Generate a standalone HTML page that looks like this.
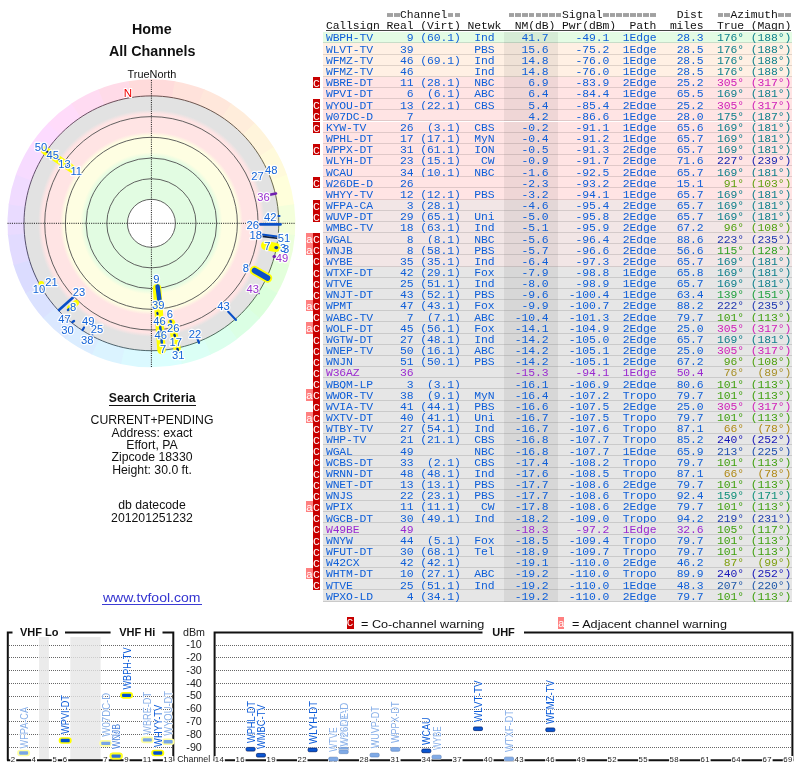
<!DOCTYPE html>
<html><head><meta charset="utf-8"><style>
html,body{margin:0;padding:0;background:#fff;width:800px;height:768px;overflow:hidden;position:relative}
#wrap{position:absolute;left:0;top:0;width:800px;height:768px;will-change:transform}
.m{position:absolute;font-family:"Liberation Mono",monospace;font-size:11.4px;line-height:11.4px;white-space:pre;letter-spacing:-0.096px}
.s{position:absolute;font-family:"Liberation Sans",sans-serif;text-align:center;white-space:pre}
.row{position:absolute;left:323px;width:469px;height:10.163px;border-bottom:1px solid rgba(0,0,0,0.12);box-sizing:content-box}
.nmc{position:absolute;left:504.3px;width:53.7px;height:11.163px;background:rgba(40,40,40,0.075)}
.bc{position:absolute;left:313px;width:7px;height:11.163px;background:#c80000;color:#fff;font-family:"Liberation Mono",monospace;font-size:11.5px;line-height:13.76px;text-align:center}
.abs{position:absolute}
.eq{position:absolute;width:5.7px;height:4px;background:linear-gradient(#a8a8a8 0,#a0a0a0 40%,#b4b4b4 50%,#a0a0a0 60%,#a8a8a8 100%)}
.pl{font-family:"Liberation Sans",sans-serif;font-size:11.2px;text-anchor:middle}
.plh{font-family:"Liberation Sans",sans-serif;font-size:11.2px;text-anchor:middle;fill:#fff;stroke:#fff;stroke-width:2.4px;stroke-linejoin:round;opacity:0.9}
.gd{stroke:#666;stroke-width:1;stroke-dasharray:1 1}
.fr{fill:none;stroke:#111;stroke-width:2}
.tl{font-family:"Liberation Sans",sans-serif;font-weight:bold;font-size:11px;fill:#111}
.ax{font-family:"Liberation Sans",sans-serif;font-size:10.7px;fill:#222}
.ch{font-family:"Liberation Sans",sans-serif;font-size:8.9px;fill:#222}
.cl{font-family:"Liberation Sans",sans-serif;font-size:7.8px;fill:#222;letter-spacing:0.5px}
.vl{font-family:"Liberation Sans",sans-serif;font-size:10.2px;paint-order:stroke;stroke:#fff;stroke-width:1.6px;stroke-linejoin:round}
.ba{position:absolute;left:306px;width:7px;height:11.163px;background:#ff8080;color:#fff;font-family:"Liberation Mono",monospace;font-size:11.5px;line-height:13.76px;text-align:center}
</style></head><body><div id="wrap">
<svg class="abs" style="left:0;top:0" width="300" height="372" viewBox="0 0 300 372"><defs><radialGradient id="rg" gradientUnits="userSpaceOnUse" cx="151.4" cy="223.3" r="127.4"><stop offset="0.0000" stop-color="#e2fce2"/><stop offset="0.5181" stop-color="#e2fce2"/><stop offset="0.5573" stop-color="#fefee2"/><stop offset="0.6860" stop-color="#fefee2"/><stop offset="0.7174" stop-color="#ffe4e4"/><stop offset="0.8587" stop-color="#ffe4e4"/><stop offset="0.8901" stop-color="#e2e2e2"/><stop offset="1.0000" stop-color="#e2e2e2"/></radialGradient></defs><path d="M128.13 81.19 A144.0 144.0 0 0 1 175.41 81.32 L172.65 97.68 A127.4 127.4 0 0 0 130.81 97.57 Z" fill="#ffdbdb"/><path d="M174.67 81.19 A144.0 144.0 0 0 1 204.85 89.59 L198.69 105.00 A127.4 127.4 0 0 0 171.99 97.57 Z" fill="#ffe2db"/><path d="M204.15 89.31 A144.0 144.0 0 0 1 231.88 103.89 L222.60 117.66 A127.4 127.4 0 0 0 198.07 104.76 Z" fill="#ffe7db"/><path d="M231.26 103.47 A144.0 144.0 0 0 1 255.28 123.58 L243.31 135.07 A127.4 127.4 0 0 0 222.05 117.28 Z" fill="#ffeddb"/><path d="M254.76 123.03 A144.0 144.0 0 0 1 274.00 147.76 L259.86 156.47 A127.4 127.4 0 0 0 242.84 134.59 Z" fill="#fff4db"/><path d="M273.60 147.12 A144.0 144.0 0 0 1 287.18 175.35 L271.53 180.88 A127.4 127.4 0 0 0 259.51 155.90 Z" fill="#fffadb"/><path d="M286.93 174.64 A144.0 144.0 0 0 1 294.25 205.10 L277.78 207.20 A127.4 127.4 0 0 0 271.31 180.25 Z" fill="#ffffdb"/><path d="M294.15 204.35 A144.0 144.0 0 0 1 294.87 235.68 L278.33 234.25 A127.4 127.4 0 0 0 277.69 206.54 Z" fill="#f4ffdb"/><path d="M294.93 234.92 A144.0 144.0 0 0 1 289.02 265.69 L273.15 260.80 A127.4 127.4 0 0 0 278.38 233.58 Z" fill="#ecffdb"/><path d="M289.24 264.97 A144.0 144.0 0 0 1 276.97 293.79 L262.49 285.67 A127.4 127.4 0 0 0 273.35 260.17 Z" fill="#e3ffdb"/><path d="M277.33 293.13 A144.0 144.0 0 0 1 259.25 318.72 L246.82 307.72 A127.4 127.4 0 0 0 262.82 285.08 Z" fill="#dbffdc"/><path d="M259.75 318.15 A144.0 144.0 0 0 1 236.67 339.34 L226.84 325.96 A127.4 127.4 0 0 0 247.26 307.22 Z" fill="#dbffe4"/><path d="M237.28 338.89 A144.0 144.0 0 0 1 210.25 354.73 L203.46 339.58 A127.4 127.4 0 0 0 227.38 325.57 Z" fill="#dbffed"/><path d="M210.93 354.42 A144.0 144.0 0 0 1 181.17 364.19 L177.74 347.95 A127.4 127.4 0 0 0 204.07 339.30 Z" fill="#dbfff5"/><path d="M181.90 364.03 A144.0 144.0 0 0 1 150.75 367.30 L150.82 350.70 A127.4 127.4 0 0 0 178.39 347.81 Z" fill="#dbfffe"/><path d="M151.50 367.30 A144.0 144.0 0 0 1 120.36 363.91 L123.93 347.70 A127.4 127.4 0 0 0 151.49 350.70 Z" fill="#dbf9ff"/><path d="M121.09 364.07 A144.0 144.0 0 0 1 91.36 354.19 L98.28 339.10 A127.4 127.4 0 0 0 124.59 347.85 Z" fill="#dbf3ff"/><path d="M92.05 354.50 A144.0 144.0 0 0 1 65.08 338.56 L75.03 325.27 A127.4 127.4 0 0 0 98.89 339.38 Z" fill="#dbedff"/><path d="M65.68 339.01 A144.0 144.0 0 0 1 42.69 317.73 L55.22 306.85 A127.4 127.4 0 0 0 75.57 325.67 Z" fill="#dbe8ff"/><path d="M43.18 318.30 A144.0 144.0 0 0 1 25.20 292.65 L39.75 284.66 A127.4 127.4 0 0 0 55.66 307.35 Z" fill="#dbe2ff"/><path d="M25.56 293.31 A144.0 144.0 0 0 1 13.40 264.44 L29.31 259.70 A127.4 127.4 0 0 0 40.07 285.24 Z" fill="#dbdcff"/><path d="M13.62 265.16 A144.0 144.0 0 0 1 7.83 234.37 L24.38 233.10 A127.4 127.4 0 0 0 29.50 260.34 Z" fill="#e2dbff"/><path d="M7.89 235.12 A144.0 144.0 0 0 1 8.73 203.81 L25.17 206.05 A127.4 127.4 0 0 0 24.43 233.76 Z" fill="#e9dbff"/><path d="M8.63 204.55 A144.0 144.0 0 0 1 16.06 174.12 L31.66 179.79 A127.4 127.4 0 0 0 25.08 206.72 Z" fill="#f0dbff"/><path d="M15.80 174.83 A144.0 144.0 0 0 1 29.49 146.65 L43.55 155.49 A127.4 127.4 0 0 0 31.43 180.42 Z" fill="#f7dbff"/><path d="M29.09 147.29 A144.0 144.0 0 0 1 48.43 122.64 L60.30 134.24 A127.4 127.4 0 0 0 43.19 156.05 Z" fill="#fddbff"/><path d="M47.90 123.18 A144.0 144.0 0 0 1 72.00 103.16 L81.16 117.01 A127.4 127.4 0 0 0 59.83 134.72 Z" fill="#ffdbfa"/><path d="M71.38 103.58 A144.0 144.0 0 0 1 99.16 89.11 L105.18 104.58 A127.4 127.4 0 0 0 80.60 117.38 Z" fill="#ffdbf2"/><path d="M98.46 89.38 A144.0 144.0 0 0 1 128.67 81.10 L131.29 97.50 A127.4 127.4 0 0 0 104.56 104.82 Z" fill="#ffdbe8"/><circle cx="151.4" cy="223.3" r="127.4" fill="url(#rg)"/><circle cx="151.4" cy="223.3" r="24" fill="#fff"/><circle cx="151.4" cy="223.3" r="24.0" fill="none" stroke="#505050" stroke-width="0.9"/><circle cx="151.4" cy="223.3" r="44.6" fill="none" stroke="#505050" stroke-width="0.9"/><circle cx="151.4" cy="223.3" r="65.3" fill="none" stroke="#505050" stroke-width="0.9"/><circle cx="151.4" cy="223.3" r="86.0" fill="none" stroke="#505050" stroke-width="0.9"/><circle cx="151.4" cy="223.3" r="106.7" fill="none" stroke="#505050" stroke-width="0.9"/><path d="M151.40 95.90 A127.4 127.4 0 0 1 162.50 96.38" fill="none" stroke="#5c3e3d" stroke-width="0.9"/><path d="M162.50 96.38 A127.4 127.4 0 0 1 173.52 97.84" fill="none" stroke="#5c403d" stroke-width="0.9"/><path d="M173.52 97.84 A127.4 127.4 0 0 1 184.37 100.24" fill="none" stroke="#5c423d" stroke-width="0.9"/><path d="M184.37 100.24 A127.4 127.4 0 0 1 194.97 103.58" fill="none" stroke="#5c443d" stroke-width="0.9"/><path d="M194.97 103.58 A127.4 127.4 0 0 1 205.24 107.84" fill="none" stroke="#5c463d" stroke-width="0.9"/><path d="M205.24 107.84 A127.4 127.4 0 0 1 215.10 112.97" fill="none" stroke="#5c473d" stroke-width="0.9"/><path d="M215.10 112.97 A127.4 127.4 0 0 1 224.47 118.94" fill="none" stroke="#5c4a3d" stroke-width="0.9"/><path d="M224.47 118.94 A127.4 127.4 0 0 1 233.29 125.71" fill="none" stroke="#5c4c3d" stroke-width="0.9"/><path d="M233.29 125.71 A127.4 127.4 0 0 1 241.49 133.21" fill="none" stroke="#5c4e3d" stroke-width="0.9"/><path d="M241.49 133.21 A127.4 127.4 0 0 1 248.99 141.41" fill="none" stroke="#5c503d" stroke-width="0.9"/><path d="M248.99 141.41 A127.4 127.4 0 0 1 255.76 150.23" fill="none" stroke="#5c523d" stroke-width="0.9"/><path d="M255.76 150.23 A127.4 127.4 0 0 1 261.73 159.60" fill="none" stroke="#5c553d" stroke-width="0.9"/><path d="M261.73 159.60 A127.4 127.4 0 0 1 266.86 169.46" fill="none" stroke="#5c573d" stroke-width="0.9"/><path d="M266.86 169.46 A127.4 127.4 0 0 1 271.12 179.73" fill="none" stroke="#5c583d" stroke-width="0.9"/><path d="M271.12 179.73 A127.4 127.4 0 0 1 274.46 190.33" fill="none" stroke="#5c5a3d" stroke-width="0.9"/><path d="M274.46 190.33 A127.4 127.4 0 0 1 276.86 201.18" fill="none" stroke="#5b5c3d" stroke-width="0.9"/><path d="M276.86 201.18 A127.4 127.4 0 0 1 278.32 212.20" fill="none" stroke="#575c3d" stroke-width="0.9"/><path d="M278.32 212.20 A127.4 127.4 0 0 1 278.80 223.30" fill="none" stroke="#535c3d" stroke-width="0.9"/><path d="M278.80 223.30 A127.4 127.4 0 0 1 278.32 234.40" fill="none" stroke="#505c3d" stroke-width="0.9"/><path d="M278.32 234.40 A127.4 127.4 0 0 1 276.86 245.42" fill="none" stroke="#4d5c3d" stroke-width="0.9"/><path d="M276.86 245.42 A127.4 127.4 0 0 1 274.46 256.27" fill="none" stroke="#4a5c3d" stroke-width="0.9"/><path d="M274.46 256.27 A127.4 127.4 0 0 1 271.12 266.87" fill="none" stroke="#475c3d" stroke-width="0.9"/><path d="M271.12 266.87 A127.4 127.4 0 0 1 266.86 277.14" fill="none" stroke="#445c3d" stroke-width="0.9"/><path d="M266.86 277.14 A127.4 127.4 0 0 1 261.73 287.00" fill="none" stroke="#415c3d" stroke-width="0.9"/><path d="M261.73 287.00 A127.4 127.4 0 0 1 255.76 296.37" fill="none" stroke="#3e5c3d" stroke-width="0.9"/><path d="M255.76 296.37 A127.4 127.4 0 0 1 248.99 305.19" fill="none" stroke="#3d5c3f" stroke-width="0.9"/><path d="M248.99 305.19 A127.4 127.4 0 0 1 241.49 313.39" fill="none" stroke="#3d5c42" stroke-width="0.9"/><path d="M241.49 313.39 A127.4 127.4 0 0 1 233.29 320.89" fill="none" stroke="#3d5c45" stroke-width="0.9"/><path d="M233.29 320.89 A127.4 127.4 0 0 1 224.47 327.66" fill="none" stroke="#3d5c48" stroke-width="0.9"/><path d="M224.47 327.66 A127.4 127.4 0 0 1 215.10 333.63" fill="none" stroke="#3d5c4b" stroke-width="0.9"/><path d="M215.10 333.63 A127.4 127.4 0 0 1 205.24 338.76" fill="none" stroke="#3d5c4e" stroke-width="0.9"/><path d="M205.24 338.76 A127.4 127.4 0 0 1 194.97 343.02" fill="none" stroke="#3d5c51" stroke-width="0.9"/><path d="M194.97 343.02 A127.4 127.4 0 0 1 184.37 346.36" fill="none" stroke="#3d5c54" stroke-width="0.9"/><path d="M184.37 346.36 A127.4 127.4 0 0 1 173.52 348.76" fill="none" stroke="#3d5c57" stroke-width="0.9"/><path d="M173.52 348.76 A127.4 127.4 0 0 1 162.50 350.22" fill="none" stroke="#3d5c5a" stroke-width="0.9"/><path d="M162.50 350.22 A127.4 127.4 0 0 1 151.40 350.70" fill="none" stroke="#3d5a5c" stroke-width="0.9"/><path d="M151.40 350.70 A127.4 127.4 0 0 1 140.30 350.22" fill="none" stroke="#3d585c" stroke-width="0.9"/><path d="M140.30 350.22 A127.4 127.4 0 0 1 129.28 348.76" fill="none" stroke="#3d565c" stroke-width="0.9"/><path d="M129.28 348.76 A127.4 127.4 0 0 1 118.43 346.36" fill="none" stroke="#3d545c" stroke-width="0.9"/><path d="M118.43 346.36 A127.4 127.4 0 0 1 107.83 343.02" fill="none" stroke="#3d525c" stroke-width="0.9"/><path d="M107.83 343.02 A127.4 127.4 0 0 1 97.56 338.76" fill="none" stroke="#3d505c" stroke-width="0.9"/><path d="M97.56 338.76 A127.4 127.4 0 0 1 87.70 333.63" fill="none" stroke="#3d4e5c" stroke-width="0.9"/><path d="M87.70 333.63 A127.4 127.4 0 0 1 78.33 327.66" fill="none" stroke="#3d4c5c" stroke-width="0.9"/><path d="M78.33 327.66 A127.4 127.4 0 0 1 69.51 320.89" fill="none" stroke="#3d4a5c" stroke-width="0.9"/><path d="M69.51 320.89 A127.4 127.4 0 0 1 61.31 313.39" fill="none" stroke="#3d485c" stroke-width="0.9"/><path d="M61.31 313.39 A127.4 127.4 0 0 1 53.81 305.19" fill="none" stroke="#3d465c" stroke-width="0.9"/><path d="M53.81 305.19 A127.4 127.4 0 0 1 47.04 296.37" fill="none" stroke="#3d445c" stroke-width="0.9"/><path d="M47.04 296.37 A127.4 127.4 0 0 1 41.07 287.00" fill="none" stroke="#3d425c" stroke-width="0.9"/><path d="M41.07 287.00 A127.4 127.4 0 0 1 35.94 277.14" fill="none" stroke="#3d405c" stroke-width="0.9"/><path d="M35.94 277.14 A127.4 127.4 0 0 1 31.68 266.87" fill="none" stroke="#3d3d5c" stroke-width="0.9"/><path d="M31.68 266.87 A127.4 127.4 0 0 1 28.34 256.27" fill="none" stroke="#3f3d5c" stroke-width="0.9"/><path d="M28.34 256.27 A127.4 127.4 0 0 1 25.94 245.42" fill="none" stroke="#423d5c" stroke-width="0.9"/><path d="M25.94 245.42 A127.4 127.4 0 0 1 24.48 234.40" fill="none" stroke="#453d5c" stroke-width="0.9"/><path d="M24.48 234.40 A127.4 127.4 0 0 1 24.00 223.30" fill="none" stroke="#473d5c" stroke-width="0.9"/><path d="M24.00 223.30 A127.4 127.4 0 0 1 24.48 212.20" fill="none" stroke="#4a3d5c" stroke-width="0.9"/><path d="M24.48 212.20 A127.4 127.4 0 0 1 25.94 201.18" fill="none" stroke="#4c3d5c" stroke-width="0.9"/><path d="M25.94 201.18 A127.4 127.4 0 0 1 28.34 190.33" fill="none" stroke="#4e3d5c" stroke-width="0.9"/><path d="M28.34 190.33 A127.4 127.4 0 0 1 31.68 179.73" fill="none" stroke="#513d5c" stroke-width="0.9"/><path d="M31.68 179.73 A127.4 127.4 0 0 1 35.94 169.46" fill="none" stroke="#533d5c" stroke-width="0.9"/><path d="M35.94 169.46 A127.4 127.4 0 0 1 41.07 159.60" fill="none" stroke="#563d5c" stroke-width="0.9"/><path d="M41.07 159.60 A127.4 127.4 0 0 1 47.04 150.23" fill="none" stroke="#583d5c" stroke-width="0.9"/><path d="M47.04 150.23 A127.4 127.4 0 0 1 53.81 141.41" fill="none" stroke="#5a3d5c" stroke-width="0.9"/><path d="M53.81 141.41 A127.4 127.4 0 0 1 61.31 133.21" fill="none" stroke="#5c3d5b" stroke-width="0.9"/><path d="M61.31 133.21 A127.4 127.4 0 0 1 69.51 125.71" fill="none" stroke="#5c3d59" stroke-width="0.9"/><path d="M69.51 125.71 A127.4 127.4 0 0 1 78.33 118.94" fill="none" stroke="#5c3d56" stroke-width="0.9"/><path d="M78.33 118.94 A127.4 127.4 0 0 1 87.70 112.97" fill="none" stroke="#5c3d54" stroke-width="0.9"/><path d="M87.70 112.97 A127.4 127.4 0 0 1 97.56 107.84" fill="none" stroke="#5c3d51" stroke-width="0.9"/><path d="M97.56 107.84 A127.4 127.4 0 0 1 107.83 103.58" fill="none" stroke="#5c3d4d" stroke-width="0.9"/><path d="M107.83 103.58 A127.4 127.4 0 0 1 118.43 100.24" fill="none" stroke="#5c3d4a" stroke-width="0.9"/><path d="M118.43 100.24 A127.4 127.4 0 0 1 129.28 97.84" fill="none" stroke="#5c3d46" stroke-width="0.9"/><path d="M129.28 97.84 A127.4 127.4 0 0 1 140.30 96.38" fill="none" stroke="#5c3d43" stroke-width="0.9"/><path d="M140.30 96.38 A127.4 127.4 0 0 1 151.40 95.90" fill="none" stroke="#5c3d3f" stroke-width="0.9"/><line x1="7.5" y1="223.3" x2="295.3" y2="223.3" stroke="#222" stroke-width="1" stroke-dasharray="1.1 1.1"/><line x1="151.4" y1="80" x2="151.4" y2="367" stroke="#222" stroke-width="1" stroke-dasharray="1.1 1.1"/><text x="128" y="96.8" font-family="Liberation Sans" font-size="11.5" fill="#f00000" text-anchor="middle" style="paint-order:stroke" stroke="#fff" stroke-width="2">N</text><line x1="45.0" y1="150.5" x2="71.5" y2="168.5" stroke="#ffff00" stroke-width="8.0" stroke-linecap="round"/><line x1="157.0" y1="288.0" x2="161.5" y2="350.0" stroke="#ffff00" stroke-width="8.5" stroke-linecap="round"/><line x1="171.5" y1="323.0" x2="177.0" y2="348.0" stroke="#ffff00" stroke-width="7.5" stroke-linecap="round"/><line x1="254.5" y1="270.5" x2="267.5" y2="278.0" stroke="#ffff00" stroke-width="9.5" stroke-linecap="round"/><line x1="265.5" y1="245.5" x2="276.0" y2="247.5" stroke="#ffff00" stroke-width="9.0" stroke-linecap="round"/><line x1="41.0" y1="283.5" x2="41.5" y2="283.5" stroke="#ffff00" stroke-width="5.0" stroke-linecap="round"/><line x1="70.0" y1="308.0" x2="76.0" y2="303.0" stroke="#ffff00" stroke-width="6.0" stroke-linecap="round"/><line x1="46.0" y1="151.0" x2="50.0" y2="153.5" stroke="#08246a" stroke-width="2.2" stroke-linecap="round"/><line x1="56.5" y1="158.0" x2="60.0" y2="160.5" stroke="#0a50c8" stroke-width="2.0" stroke-linecap="round"/><line x1="66.0" y1="164.5" x2="69.0" y2="166.0" stroke="#0a50c8" stroke-width="2.0" stroke-linecap="round"/><line x1="157.6" y1="286.5" x2="159.4" y2="300.0" stroke="#0a50c8" stroke-width="4.5" stroke-linecap="round"/><line x1="157.3" y1="313.0" x2="157.6" y2="314.0" stroke="#003090" stroke-width="2.2" stroke-linecap="round"/><line x1="160.2" y1="327.0" x2="160.8" y2="331.5" stroke="#0a50c8" stroke-width="2.5" stroke-linecap="round"/><line x1="161.5" y1="339.0" x2="161.8" y2="343.0" stroke="#0a50c8" stroke-width="2.5" stroke-linecap="round"/><line x1="170.5" y1="321.0" x2="171.0" y2="322.0" stroke="#0a50c8" stroke-width="2.5" stroke-linecap="round"/><line x1="174.5" y1="335.0" x2="174.8" y2="336.0" stroke="#003090" stroke-width="2.5" stroke-linecap="round"/><line x1="177.5" y1="349.0" x2="177.8" y2="350.0" stroke="#003090" stroke-width="2.5" stroke-linecap="round"/><line x1="260.0" y1="224.4" x2="280.5" y2="224.4" stroke="#0a50c8" stroke-width="2.6" stroke-linecap="round"/><line x1="262.0" y1="234.6" x2="277.0" y2="236.4" stroke="#0a50c8" stroke-width="2.0" stroke-linecap="round"/><line x1="262.0" y1="236.4" x2="277.0" y2="238.2" stroke="#102040" stroke-width="1.6" stroke-linecap="round"/><line x1="278.5" y1="216.0" x2="279.5" y2="216.0" stroke="#0a50c8" stroke-width="2.2" stroke-linecap="round"/><line x1="271.0" y1="194.6" x2="276.0" y2="193.6" stroke="#7020b0" stroke-width="2.6" stroke-linecap="round"/><line x1="274.0" y1="256.5" x2="274.6" y2="256.5" stroke="#7020b0" stroke-width="3.0" stroke-linecap="round"/><line x1="258.5" y1="293.0" x2="259.0" y2="293.5" stroke="#7020b0" stroke-width="1.6" stroke-linecap="round"/><line x1="276.0" y1="247.6" x2="276.5" y2="247.6" stroke="#0a3a90" stroke-width="3.4" stroke-linecap="round"/><line x1="254.5" y1="270.5" x2="267.5" y2="278.0" stroke="#0a50c8" stroke-width="5.6" stroke-linecap="round"/><line x1="228.0" y1="311.5" x2="236.0" y2="320.0" stroke="#0a50c8" stroke-width="2.0" stroke-linecap="round"/><line x1="197.6" y1="339.2" x2="199.0" y2="342.8" stroke="#0a50c8" stroke-width="2.2" stroke-linecap="round"/><line x1="59.0" y1="310.0" x2="73.0" y2="297.5" stroke="#0a50c8" stroke-width="2.6" stroke-linecap="round"/><line x1="68.0" y1="310.0" x2="70.0" y2="308.5" stroke="#0a50c8" stroke-width="2.5" stroke-linecap="round"/><line x1="72.5" y1="322.0" x2="74.0" y2="321.0" stroke="#0a50c8" stroke-width="2.4" stroke-linecap="round"/><line x1="82.6" y1="330.0" x2="84.0" y2="327.5" stroke="#0a50c8" stroke-width="2.2" stroke-linecap="round"/><line x1="91.5" y1="335.5" x2="92.5" y2="335.0" stroke="#0a50c8" stroke-width="1.8" stroke-linecap="round"/><line x1="265.0" y1="172.5" x2="265.5" y2="172.0" stroke="#0a50c8" stroke-width="1.5" stroke-linecap="round"/><text x="41.0" y="151.3" class="plh">50</text><text x="52.7" y="158.7" class="plh">45</text><text x="64.5" y="167.5" class="plh">13</text><text x="76.2" y="175.3" class="plh">11</text><text x="257.6" y="179.6" class="plh">27</text><text x="271.3" y="173.6" class="plh">48</text><text x="270.3" y="221.0" class="plh">42</text><text x="252.7" y="228.9" class="plh">26</text><text x="255.7" y="238.6" class="plh">18</text><text x="284.0" y="241.6" class="plh">51</text><text x="267.4" y="250.3" class="plh">7</text><text x="283.0" y="252.3" class="plh">3</text><text x="286.0" y="252.9" class="plh">3</text><text x="245.9" y="271.9" class="plh">8</text><text x="223.5" y="309.9" class="plh">43</text><text x="195.0" y="337.6" class="plh">22</text><text x="156.4" y="282.7" class="plh">9</text><text x="158.3" y="309.1" class="plh">39</text><text x="159.5" y="324.7" class="plh">46</text><text x="160.7" y="338.5" class="plh">46</text><text x="163.2" y="352.9" class="plh">7</text><text x="169.9" y="318.4" class="plh">6</text><text x="173.3" y="331.9" class="plh">26</text><text x="175.7" y="345.9" class="plh">17</text><text x="178.2" y="359.4" class="plh">31</text><text x="39.0" y="292.6" class="plh">10</text><text x="51.4" y="286.4" class="plh">21</text><text x="79.0" y="295.8" class="plh">23</text><text x="73.2" y="311.4" class="plh">8</text><text x="64.5" y="322.5" class="plh">47</text><text x="67.4" y="334.2" class="plh">30</text><text x="88.3" y="325.1" class="plh">49</text><text x="97.0" y="333.3" class="plh">25</text><text x="87.3" y="343.9" class="plh">38</text><text x="263.5" y="200.5" class="plh">36</text><text x="282.0" y="262.1" class="plh">49</text><text x="252.7" y="293.4" class="plh">43</text><text x="41.0" y="151.3" class="pl" fill="#1464d8">50</text><text x="52.7" y="158.7" class="pl" fill="#1464d8">45</text><text x="64.5" y="167.5" class="pl" fill="#1464d8">13</text><text x="76.2" y="175.3" class="pl" fill="#1464d8">11</text><text x="257.6" y="179.6" class="pl" fill="#1464d8">27</text><text x="271.3" y="173.6" class="pl" fill="#1464d8">48</text><text x="270.3" y="221.0" class="pl" fill="#1464d8">42</text><text x="252.7" y="228.9" class="pl" fill="#1464d8">26</text><text x="255.7" y="238.6" class="pl" fill="#1464d8">18</text><text x="284.0" y="241.6" class="pl" fill="#1464d8">51</text><text x="267.4" y="250.3" class="pl" fill="#1464d8">7</text><text x="283.0" y="252.3" class="pl" fill="#1464d8">3</text><text x="286.0" y="252.9" class="pl" fill="#1464d8">3</text><text x="245.9" y="271.9" class="pl" fill="#1464d8">8</text><text x="223.5" y="309.9" class="pl" fill="#1464d8">43</text><text x="195.0" y="337.6" class="pl" fill="#1464d8">22</text><text x="156.4" y="282.7" class="pl" fill="#1464d8">9</text><text x="158.3" y="309.1" class="pl" fill="#1464d8">39</text><text x="159.5" y="324.7" class="pl" fill="#1464d8">46</text><text x="160.7" y="338.5" class="pl" fill="#1464d8">46</text><text x="163.2" y="352.9" class="pl" fill="#1464d8">7</text><text x="169.9" y="318.4" class="pl" fill="#1464d8">6</text><text x="173.3" y="331.9" class="pl" fill="#1464d8">26</text><text x="175.7" y="345.9" class="pl" fill="#1464d8">17</text><text x="178.2" y="359.4" class="pl" fill="#1464d8">31</text><text x="39.0" y="292.6" class="pl" fill="#1464d8">10</text><text x="51.4" y="286.4" class="pl" fill="#1464d8">21</text><text x="79.0" y="295.8" class="pl" fill="#1464d8">23</text><text x="73.2" y="311.4" class="pl" fill="#1464d8">8</text><text x="64.5" y="322.5" class="pl" fill="#1464d8">47</text><text x="67.4" y="334.2" class="pl" fill="#1464d8">30</text><text x="88.3" y="325.1" class="pl" fill="#1464d8">49</text><text x="97.0" y="333.3" class="pl" fill="#1464d8">25</text><text x="87.3" y="343.9" class="pl" fill="#1464d8">38</text><text x="263.5" y="200.5" class="pl" fill="#9a30d0">36</text><text x="282.0" y="262.1" class="pl" fill="#9a30d0">49</text><text x="252.7" y="293.4" class="pl" fill="#9a30d0">43</text></svg>
<div class="s" style="left:-48.10px;top:21.65px;width:400px;font-size:14.3px;line-height:14.3px;color:#111;font-weight:bold;">Home</div><div class="s" style="left:-47.80px;top:44.15px;width:400px;font-size:14.3px;line-height:14.3px;color:#111;font-weight:bold;">All Channels</div><div class="s" style="left:-48.10px;top:68.77px;width:400px;font-size:10.9px;line-height:10.9px;color:#111;">TrueNorth</div><div class="s" style="left:-47.80px;top:391.57px;width:400px;font-size:12.2px;line-height:12.2px;color:#111;font-weight:bold;">Search Criteria</div><div class="abs" style="left:108.5px;top:404.6px;width:87.5px;height:1.4px;background:#111"></div><div class="s" style="left:-48.00px;top:413.73px;width:400px;font-size:12.25px;line-height:12.25px;color:#111;">CURRENT+PENDING</div><div class="s" style="left:-48.00px;top:426.63px;width:400px;font-size:12.25px;line-height:12.25px;color:#111;">Address: exact</div><div class="s" style="left:-48.00px;top:439.03px;width:400px;font-size:12.25px;line-height:12.25px;color:#111;">Effort, PA</div><div class="s" style="left:-48.00px;top:451.43px;width:400px;font-size:12.25px;line-height:12.25px;color:#111;">Zipcode 18330</div><div class="s" style="left:-48.00px;top:464.03px;width:400px;font-size:12.25px;line-height:12.25px;color:#111;">Height: 30.0 ft.</div><div class="s" style="left:-48.00px;top:499.13px;width:400px;font-size:12.25px;line-height:12.25px;color:#111;">db datecode</div><div class="s" style="left:-48.00px;top:512.23px;width:400px;font-size:12.25px;line-height:12.25px;color:#111;">201201251232</div><div class="s" style="left:-48.00px;top:591.53px;width:400px;font-size:12.6px;line-height:12.6px;color:#3434d0;"><span style="display:inline-block;transform:scaleX(1.115);transform-origin:50% 50%;">www.tvfool.com</span></div><div class="abs" style="left:102.2px;top:603.8px;width:99.7px;height:1px;background:#3c3cd4"></div>
<div class="eq" style="left:387.10px;top:13.07px"></div><div class="eq" style="left:393.85px;top:13.07px"></div><div class="m" style="left:400.09px;top:10.47px;color:#111">Channel</div><div class="eq" style="left:447.81px;top:13.07px"></div><div class="eq" style="left:454.55px;top:13.07px"></div><div class="eq" style="left:508.51px;top:13.07px"></div><div class="eq" style="left:515.26px;top:13.07px"></div><div class="eq" style="left:522.00px;top:13.07px"></div><div class="eq" style="left:528.75px;top:13.07px"></div><div class="eq" style="left:535.50px;top:13.07px"></div><div class="eq" style="left:542.24px;top:13.07px"></div><div class="eq" style="left:548.99px;top:13.07px"></div><div class="eq" style="left:555.73px;top:13.07px"></div><div class="m" style="left:561.98px;top:10.47px;color:#111">Signal</div><div class="eq" style="left:602.94px;top:13.07px"></div><div class="eq" style="left:609.69px;top:13.07px"></div><div class="eq" style="left:616.43px;top:13.07px"></div><div class="eq" style="left:623.18px;top:13.07px"></div><div class="eq" style="left:629.92px;top:13.07px"></div><div class="eq" style="left:636.67px;top:13.07px"></div><div class="eq" style="left:643.41px;top:13.07px"></div><div class="eq" style="left:650.16px;top:13.07px"></div><div class="m" style="left:676.64px;top:10.47px;color:#111">Dist</div><div class="eq" style="left:717.61px;top:13.07px"></div><div class="eq" style="left:724.36px;top:13.07px"></div><div class="m" style="left:730.60px;top:10.47px;color:#111">Azimuth</div><div class="eq" style="left:778.32px;top:13.07px"></div><div class="eq" style="left:785.06px;top:13.07px"></div><div class="m" style="left:325.90px;top:21.37px;color:#111">Callsign</div><div class="m" style="left:386.60px;top:21.37px;color:#111">Real</div><div class="m" style="left:420.33px;top:21.37px;color:#111">(Virt)</div><div class="m" style="left:467.54px;top:21.37px;color:#111">Netwk</div><div class="m" style="left:514.76px;top:21.37px;color:#111">NM(dB)</div><div class="m" style="left:561.98px;top:21.37px;color:#111">Pwr(dBm)</div><div class="m" style="left:629.42px;top:21.37px;color:#111">Path</div><div class="m" style="left:669.89px;top:21.37px;color:#111">miles</div><div class="m" style="left:717.11px;top:21.37px;color:#111">True</div><div class="m" style="left:750.84px;top:21.37px;color:#111">(Magn)</div><div style="position:absolute;left:325.5px;top:30px;width:465.5px;height:1px;background:#444"></div><div class="row" style="top:32.200px;background:#e4fce4"></div><div class="nmc" style="top:32.200px"></div><div class="m" style="left:325.90px;top:32.57px;color:#0f5fd8">WBPH-TV</div><div class="m" style="left:406.84px;top:32.57px;color:#0f5fd8">9</div><div class="m" style="left:420.33px;top:32.57px;color:#0f5fd8">(60.1)</div><div class="m" style="left:474.29px;top:32.57px;color:#0f5fd8">Ind</div><div class="m" style="left:521.50px;top:32.57px;color:#0f5fd8">41.7</div><div class="m" style="left:575.46px;top:32.57px;color:#0f5fd8">-49.1</div><div class="m" style="left:622.68px;top:32.57px;color:#0f5fd8">1Edge</div><div class="m" style="left:676.64px;top:32.57px;color:#0f5fd8">28.3</div><div class="m" style="left:717.11px;top:32.57px;color:#10808c">176°</div><div class="m" style="left:750.84px;top:32.57px;color:#10808c">(188°)</div><div class="row" style="top:43.363px;background:#fff0e4"></div><div class="nmc" style="top:43.363px"></div><div class="m" style="left:325.90px;top:44.73px;color:#0f5fd8">WLVT-TV</div><div class="m" style="left:400.09px;top:44.73px;color:#0f5fd8">39</div><div class="m" style="left:474.29px;top:44.73px;color:#0f5fd8">PBS</div><div class="m" style="left:521.50px;top:44.73px;color:#0f5fd8">15.6</div><div class="m" style="left:575.46px;top:44.73px;color:#0f5fd8">-75.2</div><div class="m" style="left:622.68px;top:44.73px;color:#0f5fd8">1Edge</div><div class="m" style="left:676.64px;top:44.73px;color:#0f5fd8">28.5</div><div class="m" style="left:717.11px;top:44.73px;color:#10808c">176°</div><div class="m" style="left:750.84px;top:44.73px;color:#10808c">(188°)</div><div class="row" style="top:54.526px;background:#fff0e4"></div><div class="nmc" style="top:54.526px"></div><div class="m" style="left:325.90px;top:55.89px;color:#0f5fd8">WFMZ-TV</div><div class="m" style="left:400.09px;top:55.89px;color:#0f5fd8">46</div><div class="m" style="left:420.33px;top:55.89px;color:#0f5fd8">(69.1)</div><div class="m" style="left:474.29px;top:55.89px;color:#0f5fd8">Ind</div><div class="m" style="left:521.50px;top:55.89px;color:#0f5fd8">14.8</div><div class="m" style="left:575.46px;top:55.89px;color:#0f5fd8">-76.0</div><div class="m" style="left:622.68px;top:55.89px;color:#0f5fd8">1Edge</div><div class="m" style="left:676.64px;top:55.89px;color:#0f5fd8">28.5</div><div class="m" style="left:717.11px;top:55.89px;color:#10808c">176°</div><div class="m" style="left:750.84px;top:55.89px;color:#10808c">(188°)</div><div class="row" style="top:65.689px;background:#fff0e4"></div><div class="nmc" style="top:65.689px"></div><div class="m" style="left:325.90px;top:67.06px;color:#0f5fd8">WFMZ-TV</div><div class="m" style="left:400.09px;top:67.06px;color:#0f5fd8">46</div><div class="m" style="left:474.29px;top:67.06px;color:#0f5fd8">Ind</div><div class="m" style="left:521.50px;top:67.06px;color:#0f5fd8">14.8</div><div class="m" style="left:575.46px;top:67.06px;color:#0f5fd8">-76.0</div><div class="m" style="left:622.68px;top:67.06px;color:#0f5fd8">1Edge</div><div class="m" style="left:676.64px;top:67.06px;color:#0f5fd8">28.5</div><div class="m" style="left:717.11px;top:67.06px;color:#10808c">176°</div><div class="m" style="left:750.84px;top:67.06px;color:#10808c">(188°)</div><div class="row" style="top:76.852px;background:#ffe4e4"></div><div class="nmc" style="top:76.852px"></div><div class="bc" style="top:76.852px">C</div><div class="m" style="left:325.90px;top:78.22px;color:#0f5fd8">WBRE-DT</div><div class="m" style="left:400.09px;top:78.22px;color:#0f5fd8">11</div><div class="m" style="left:420.33px;top:78.22px;color:#0f5fd8">(28.1)</div><div class="m" style="left:474.29px;top:78.22px;color:#0f5fd8">NBC</div><div class="m" style="left:528.25px;top:78.22px;color:#0f5fd8">6.9</div><div class="m" style="left:575.46px;top:78.22px;color:#0f5fd8">-83.9</div><div class="m" style="left:622.68px;top:78.22px;color:#0f5fd8">2Edge</div><div class="m" style="left:676.64px;top:78.22px;color:#0f5fd8">25.2</div><div class="m" style="left:717.11px;top:78.22px;color:#d020b8">305°</div><div class="m" style="left:750.84px;top:78.22px;color:#d020b8">(317°)</div><div class="row" style="top:88.015px;background:#ffe4e4"></div><div class="nmc" style="top:88.015px"></div><div class="m" style="left:325.90px;top:89.38px;color:#0f5fd8">WPVI-DT</div><div class="m" style="left:406.84px;top:89.38px;color:#0f5fd8">6</div><div class="m" style="left:427.07px;top:89.38px;color:#0f5fd8">(6.1)</div><div class="m" style="left:474.29px;top:89.38px;color:#0f5fd8">ABC</div><div class="m" style="left:528.25px;top:89.38px;color:#0f5fd8">6.4</div><div class="m" style="left:575.46px;top:89.38px;color:#0f5fd8">-84.4</div><div class="m" style="left:622.68px;top:89.38px;color:#0f5fd8">1Edge</div><div class="m" style="left:676.64px;top:89.38px;color:#0f5fd8">65.5</div><div class="m" style="left:717.11px;top:89.38px;color:#10808c">169°</div><div class="m" style="left:750.84px;top:89.38px;color:#10808c">(181°)</div><div class="row" style="top:99.178px;background:#ffe4e4"></div><div class="nmc" style="top:99.178px"></div><div class="bc" style="top:99.178px">C</div><div class="m" style="left:325.90px;top:100.54px;color:#0f5fd8">WYOU-DT</div><div class="m" style="left:400.09px;top:100.54px;color:#0f5fd8">13</div><div class="m" style="left:420.33px;top:100.54px;color:#0f5fd8">(22.1)</div><div class="m" style="left:474.29px;top:100.54px;color:#0f5fd8">CBS</div><div class="m" style="left:528.25px;top:100.54px;color:#0f5fd8">5.4</div><div class="m" style="left:575.46px;top:100.54px;color:#0f5fd8">-85.4</div><div class="m" style="left:622.68px;top:100.54px;color:#0f5fd8">2Edge</div><div class="m" style="left:676.64px;top:100.54px;color:#0f5fd8">25.2</div><div class="m" style="left:717.11px;top:100.54px;color:#d020b8">305°</div><div class="m" style="left:750.84px;top:100.54px;color:#d020b8">(317°)</div><div class="row" style="top:110.341px;background:#ffe4e4"></div><div class="nmc" style="top:110.341px"></div><div class="bc" style="top:110.341px">C</div><div class="m" style="left:325.90px;top:111.71px;color:#0f5fd8">W07DC-D</div><div class="m" style="left:406.84px;top:111.71px;color:#0f5fd8">7</div><div class="m" style="left:528.25px;top:111.71px;color:#0f5fd8">4.2</div><div class="m" style="left:575.46px;top:111.71px;color:#0f5fd8">-86.6</div><div class="m" style="left:622.68px;top:111.71px;color:#0f5fd8">1Edge</div><div class="m" style="left:676.64px;top:111.71px;color:#0f5fd8">28.0</div><div class="m" style="left:717.11px;top:111.71px;color:#10808c">175°</div><div class="m" style="left:750.84px;top:111.71px;color:#10808c">(187°)</div><div class="row" style="top:121.504px;background:#ffe4e4"></div><div class="nmc" style="top:121.504px"></div><div class="bc" style="top:121.504px">C</div><div class="m" style="left:325.90px;top:122.87px;color:#0f5fd8">KYW-TV</div><div class="m" style="left:400.09px;top:122.87px;color:#0f5fd8">26</div><div class="m" style="left:427.07px;top:122.87px;color:#0f5fd8">(3.1)</div><div class="m" style="left:474.29px;top:122.87px;color:#0f5fd8">CBS</div><div class="m" style="left:521.50px;top:122.87px;color:#0f5fd8">-0.2</div><div class="m" style="left:575.46px;top:122.87px;color:#0f5fd8">-91.1</div><div class="m" style="left:622.68px;top:122.87px;color:#0f5fd8">1Edge</div><div class="m" style="left:676.64px;top:122.87px;color:#0f5fd8">65.6</div><div class="m" style="left:717.11px;top:122.87px;color:#10808c">169°</div><div class="m" style="left:750.84px;top:122.87px;color:#10808c">(181°)</div><div class="row" style="top:132.667px;background:#ffe4e4"></div><div class="nmc" style="top:132.667px"></div><div class="m" style="left:325.90px;top:134.03px;color:#0f5fd8">WPHL-DT</div><div class="m" style="left:400.09px;top:134.03px;color:#0f5fd8">17</div><div class="m" style="left:420.33px;top:134.03px;color:#0f5fd8">(17.1)</div><div class="m" style="left:474.29px;top:134.03px;color:#0f5fd8">MyN</div><div class="m" style="left:521.50px;top:134.03px;color:#0f5fd8">-0.4</div><div class="m" style="left:575.46px;top:134.03px;color:#0f5fd8">-91.2</div><div class="m" style="left:622.68px;top:134.03px;color:#0f5fd8">1Edge</div><div class="m" style="left:676.64px;top:134.03px;color:#0f5fd8">65.7</div><div class="m" style="left:717.11px;top:134.03px;color:#10808c">169°</div><div class="m" style="left:750.84px;top:134.03px;color:#10808c">(181°)</div><div class="row" style="top:143.830px;background:#ffe4e4"></div><div class="nmc" style="top:143.830px"></div><div class="bc" style="top:143.830px">C</div><div class="m" style="left:325.90px;top:145.20px;color:#0f5fd8">WPPX-DT</div><div class="m" style="left:400.09px;top:145.20px;color:#0f5fd8">31</div><div class="m" style="left:420.33px;top:145.20px;color:#0f5fd8">(61.1)</div><div class="m" style="left:474.29px;top:145.20px;color:#0f5fd8">ION</div><div class="m" style="left:521.50px;top:145.20px;color:#0f5fd8">-0.5</div><div class="m" style="left:575.46px;top:145.20px;color:#0f5fd8">-91.3</div><div class="m" style="left:622.68px;top:145.20px;color:#0f5fd8">2Edge</div><div class="m" style="left:676.64px;top:145.20px;color:#0f5fd8">65.7</div><div class="m" style="left:717.11px;top:145.20px;color:#10808c">169°</div><div class="m" style="left:750.84px;top:145.20px;color:#10808c">(181°)</div><div class="row" style="top:154.993px;background:#ffe4e4"></div><div class="nmc" style="top:154.993px"></div><div class="m" style="left:325.90px;top:156.36px;color:#0f5fd8">WLYH-DT</div><div class="m" style="left:400.09px;top:156.36px;color:#0f5fd8">23</div><div class="m" style="left:420.33px;top:156.36px;color:#0f5fd8">(15.1)</div><div class="m" style="left:481.03px;top:156.36px;color:#0f5fd8">CW</div><div class="m" style="left:521.50px;top:156.36px;color:#0f5fd8">-0.9</div><div class="m" style="left:575.46px;top:156.36px;color:#0f5fd8">-91.7</div><div class="m" style="left:622.68px;top:156.36px;color:#0f5fd8">2Edge</div><div class="m" style="left:676.64px;top:156.36px;color:#0f5fd8">71.6</div><div class="m" style="left:717.11px;top:156.36px;color:#1a28b0">227°</div><div class="m" style="left:750.84px;top:156.36px;color:#1a28b0">(239°)</div><div class="row" style="top:166.156px;background:#ffe4e4"></div><div class="nmc" style="top:166.156px"></div><div class="m" style="left:325.90px;top:167.52px;color:#0f5fd8">WCAU</div><div class="m" style="left:400.09px;top:167.52px;color:#0f5fd8">34</div><div class="m" style="left:420.33px;top:167.52px;color:#0f5fd8">(10.1)</div><div class="m" style="left:474.29px;top:167.52px;color:#0f5fd8">NBC</div><div class="m" style="left:521.50px;top:167.52px;color:#0f5fd8">-1.6</div><div class="m" style="left:575.46px;top:167.52px;color:#0f5fd8">-92.5</div><div class="m" style="left:622.68px;top:167.52px;color:#0f5fd8">2Edge</div><div class="m" style="left:676.64px;top:167.52px;color:#0f5fd8">65.7</div><div class="m" style="left:717.11px;top:167.52px;color:#10808c">169°</div><div class="m" style="left:750.84px;top:167.52px;color:#10808c">(181°)</div><div class="row" style="top:177.319px;background:#ffe4e4"></div><div class="nmc" style="top:177.319px"></div><div class="bc" style="top:177.319px">C</div><div class="m" style="left:325.90px;top:178.69px;color:#0f5fd8">W26DE-D</div><div class="m" style="left:400.09px;top:178.69px;color:#0f5fd8">26</div><div class="m" style="left:521.50px;top:178.69px;color:#0f5fd8">-2.3</div><div class="m" style="left:575.46px;top:178.69px;color:#0f5fd8">-93.2</div><div class="m" style="left:622.68px;top:178.69px;color:#0f5fd8">2Edge</div><div class="m" style="left:676.64px;top:178.69px;color:#0f5fd8">15.1</div><div class="m" style="left:723.86px;top:178.69px;color:#60a010">91°</div><div class="m" style="left:750.84px;top:178.69px;color:#60a010">(103°)</div><div class="row" style="top:188.482px;background:#ffe4e4"></div><div class="nmc" style="top:188.482px"></div><div class="m" style="left:325.90px;top:189.85px;color:#0f5fd8">WHYY-TV</div><div class="m" style="left:400.09px;top:189.85px;color:#0f5fd8">12</div><div class="m" style="left:420.33px;top:189.85px;color:#0f5fd8">(12.1)</div><div class="m" style="left:474.29px;top:189.85px;color:#0f5fd8">PBS</div><div class="m" style="left:521.50px;top:189.85px;color:#0f5fd8">-3.2</div><div class="m" style="left:575.46px;top:189.85px;color:#0f5fd8">-94.1</div><div class="m" style="left:622.68px;top:189.85px;color:#0f5fd8">1Edge</div><div class="m" style="left:676.64px;top:189.85px;color:#0f5fd8">65.7</div><div class="m" style="left:717.11px;top:189.85px;color:#10808c">169°</div><div class="m" style="left:750.84px;top:189.85px;color:#10808c">(181°)</div><div class="row" style="top:199.645px;background:#f2e6e6"></div><div class="nmc" style="top:199.645px"></div><div class="bc" style="top:199.645px">C</div><div class="m" style="left:325.90px;top:201.01px;color:#0f5fd8">WFPA-CA</div><div class="m" style="left:406.84px;top:201.01px;color:#0f5fd8">3</div><div class="m" style="left:420.33px;top:201.01px;color:#0f5fd8">(28.1)</div><div class="m" style="left:521.50px;top:201.01px;color:#0f5fd8">-4.6</div><div class="m" style="left:575.46px;top:201.01px;color:#0f5fd8">-95.4</div><div class="m" style="left:622.68px;top:201.01px;color:#0f5fd8">2Edge</div><div class="m" style="left:676.64px;top:201.01px;color:#0f5fd8">65.7</div><div class="m" style="left:717.11px;top:201.01px;color:#10808c">169°</div><div class="m" style="left:750.84px;top:201.01px;color:#10808c">(181°)</div><div class="row" style="top:210.808px;background:#f2e6e6"></div><div class="nmc" style="top:210.808px"></div><div class="bc" style="top:210.808px">C</div><div class="m" style="left:325.90px;top:212.17px;color:#0f5fd8">WUVP-DT</div><div class="m" style="left:400.09px;top:212.17px;color:#0f5fd8">29</div><div class="m" style="left:420.33px;top:212.17px;color:#0f5fd8">(65.1)</div><div class="m" style="left:474.29px;top:212.17px;color:#0f5fd8">Uni</div><div class="m" style="left:521.50px;top:212.17px;color:#0f5fd8">-5.0</div><div class="m" style="left:575.46px;top:212.17px;color:#0f5fd8">-95.8</div><div class="m" style="left:622.68px;top:212.17px;color:#0f5fd8">2Edge</div><div class="m" style="left:676.64px;top:212.17px;color:#0f5fd8">65.7</div><div class="m" style="left:717.11px;top:212.17px;color:#10808c">169°</div><div class="m" style="left:750.84px;top:212.17px;color:#10808c">(181°)</div><div class="row" style="top:221.971px;background:#f2e6e6"></div><div class="nmc" style="top:221.971px"></div><div class="m" style="left:325.90px;top:223.34px;color:#0f5fd8">WMBC-TV</div><div class="m" style="left:400.09px;top:223.34px;color:#0f5fd8">18</div><div class="m" style="left:420.33px;top:223.34px;color:#0f5fd8">(63.1)</div><div class="m" style="left:474.29px;top:223.34px;color:#0f5fd8">Ind</div><div class="m" style="left:521.50px;top:223.34px;color:#0f5fd8">-5.1</div><div class="m" style="left:575.46px;top:223.34px;color:#0f5fd8">-95.9</div><div class="m" style="left:622.68px;top:223.34px;color:#0f5fd8">2Edge</div><div class="m" style="left:676.64px;top:223.34px;color:#0f5fd8">67.2</div><div class="m" style="left:723.86px;top:223.34px;color:#50a010">96°</div><div class="m" style="left:750.84px;top:223.34px;color:#50a010">(108°)</div><div class="row" style="top:233.134px;background:#f2e6e6"></div><div class="nmc" style="top:233.134px"></div><div class="bc" style="top:233.134px">C</div><div class="ba" style="top:233.134px">a</div><div class="m" style="left:325.90px;top:234.50px;color:#0f5fd8">WGAL</div><div class="m" style="left:406.84px;top:234.50px;color:#0f5fd8">8</div><div class="m" style="left:427.07px;top:234.50px;color:#0f5fd8">(8.1)</div><div class="m" style="left:474.29px;top:234.50px;color:#0f5fd8">NBC</div><div class="m" style="left:521.50px;top:234.50px;color:#0f5fd8">-5.6</div><div class="m" style="left:575.46px;top:234.50px;color:#0f5fd8">-96.4</div><div class="m" style="left:622.68px;top:234.50px;color:#0f5fd8">2Edge</div><div class="m" style="left:676.64px;top:234.50px;color:#0f5fd8">88.6</div><div class="m" style="left:717.11px;top:234.50px;color:#2038b0">223°</div><div class="m" style="left:750.84px;top:234.50px;color:#2038b0">(235°)</div><div class="row" style="top:244.297px;background:#f2e6e6"></div><div class="nmc" style="top:244.297px"></div><div class="bc" style="top:244.297px">C</div><div class="ba" style="top:244.297px">a</div><div class="m" style="left:325.90px;top:245.66px;color:#0f5fd8">WNJB</div><div class="m" style="left:406.84px;top:245.66px;color:#0f5fd8">8</div><div class="m" style="left:420.33px;top:245.66px;color:#0f5fd8">(58.1)</div><div class="m" style="left:474.29px;top:245.66px;color:#0f5fd8">PBS</div><div class="m" style="left:521.50px;top:245.66px;color:#0f5fd8">-5.7</div><div class="m" style="left:575.46px;top:245.66px;color:#0f5fd8">-96.6</div><div class="m" style="left:622.68px;top:245.66px;color:#0f5fd8">2Edge</div><div class="m" style="left:676.64px;top:245.66px;color:#0f5fd8">56.6</div><div class="m" style="left:717.11px;top:245.66px;color:#30a020">115°</div><div class="m" style="left:750.84px;top:245.66px;color:#30a020">(128°)</div><div class="row" style="top:255.460px;background:#f2e6e6"></div><div class="nmc" style="top:255.460px"></div><div class="bc" style="top:255.460px">C</div><div class="m" style="left:325.90px;top:256.83px;color:#0f5fd8">WYBE</div><div class="m" style="left:400.09px;top:256.83px;color:#0f5fd8">35</div><div class="m" style="left:420.33px;top:256.83px;color:#0f5fd8">(35.1)</div><div class="m" style="left:474.29px;top:256.83px;color:#0f5fd8">Ind</div><div class="m" style="left:521.50px;top:256.83px;color:#0f5fd8">-6.4</div><div class="m" style="left:575.46px;top:256.83px;color:#0f5fd8">-97.3</div><div class="m" style="left:622.68px;top:256.83px;color:#0f5fd8">2Edge</div><div class="m" style="left:676.64px;top:256.83px;color:#0f5fd8">65.7</div><div class="m" style="left:717.11px;top:256.83px;color:#10808c">169°</div><div class="m" style="left:750.84px;top:256.83px;color:#10808c">(181°)</div><div class="row" style="top:266.623px;background:#e6e6e6"></div><div class="nmc" style="top:266.623px"></div><div class="bc" style="top:266.623px">C</div><div class="m" style="left:325.90px;top:267.99px;color:#0f5fd8">WTXF-DT</div><div class="m" style="left:400.09px;top:267.99px;color:#0f5fd8">42</div><div class="m" style="left:420.33px;top:267.99px;color:#0f5fd8">(29.1)</div><div class="m" style="left:474.29px;top:267.99px;color:#0f5fd8">Fox</div><div class="m" style="left:521.50px;top:267.99px;color:#0f5fd8">-7.9</div><div class="m" style="left:575.46px;top:267.99px;color:#0f5fd8">-98.8</div><div class="m" style="left:622.68px;top:267.99px;color:#0f5fd8">1Edge</div><div class="m" style="left:676.64px;top:267.99px;color:#0f5fd8">65.8</div><div class="m" style="left:717.11px;top:267.99px;color:#10808c">169°</div><div class="m" style="left:750.84px;top:267.99px;color:#10808c">(181°)</div><div class="row" style="top:277.786px;background:#e6e6e6"></div><div class="nmc" style="top:277.786px"></div><div class="bc" style="top:277.786px">C</div><div class="m" style="left:325.90px;top:279.15px;color:#0f5fd8">WTVE</div><div class="m" style="left:400.09px;top:279.15px;color:#0f5fd8">25</div><div class="m" style="left:420.33px;top:279.15px;color:#0f5fd8">(51.1)</div><div class="m" style="left:474.29px;top:279.15px;color:#0f5fd8">Ind</div><div class="m" style="left:521.50px;top:279.15px;color:#0f5fd8">-8.0</div><div class="m" style="left:575.46px;top:279.15px;color:#0f5fd8">-98.9</div><div class="m" style="left:622.68px;top:279.15px;color:#0f5fd8">1Edge</div><div class="m" style="left:676.64px;top:279.15px;color:#0f5fd8">65.7</div><div class="m" style="left:717.11px;top:279.15px;color:#10808c">169°</div><div class="m" style="left:750.84px;top:279.15px;color:#10808c">(181°)</div><div class="row" style="top:288.949px;background:#e6e6e6"></div><div class="nmc" style="top:288.949px"></div><div class="bc" style="top:288.949px">C</div><div class="m" style="left:325.90px;top:290.32px;color:#0f5fd8">WNJT-DT</div><div class="m" style="left:400.09px;top:290.32px;color:#0f5fd8">43</div><div class="m" style="left:420.33px;top:290.32px;color:#0f5fd8">(52.1)</div><div class="m" style="left:474.29px;top:290.32px;color:#0f5fd8">PBS</div><div class="m" style="left:521.50px;top:290.32px;color:#0f5fd8">-9.6</div><div class="m" style="left:568.72px;top:290.32px;color:#0f5fd8">-100.4</div><div class="m" style="left:622.68px;top:290.32px;color:#0f5fd8">1Edge</div><div class="m" style="left:676.64px;top:290.32px;color:#0f5fd8">63.4</div><div class="m" style="left:717.11px;top:290.32px;color:#20a040">139°</div><div class="m" style="left:750.84px;top:290.32px;color:#20a040">(151°)</div><div class="row" style="top:300.112px;background:#e6e6e6"></div><div class="nmc" style="top:300.112px"></div><div class="bc" style="top:300.112px">C</div><div class="ba" style="top:300.112px">a</div><div class="m" style="left:325.90px;top:301.48px;color:#0f5fd8">WPMT</div><div class="m" style="left:400.09px;top:301.48px;color:#0f5fd8">47</div><div class="m" style="left:420.33px;top:301.48px;color:#0f5fd8">(43.1)</div><div class="m" style="left:474.29px;top:301.48px;color:#0f5fd8">Fox</div><div class="m" style="left:521.50px;top:301.48px;color:#0f5fd8">-9.9</div><div class="m" style="left:568.72px;top:301.48px;color:#0f5fd8">-100.7</div><div class="m" style="left:622.68px;top:301.48px;color:#0f5fd8">2Edge</div><div class="m" style="left:676.64px;top:301.48px;color:#0f5fd8">88.2</div><div class="m" style="left:717.11px;top:301.48px;color:#2038b0">222°</div><div class="m" style="left:750.84px;top:301.48px;color:#2038b0">(235°)</div><div class="row" style="top:311.275px;background:#e6e6e6"></div><div class="nmc" style="top:311.275px"></div><div class="bc" style="top:311.275px">C</div><div class="m" style="left:325.90px;top:312.64px;color:#0f5fd8">WABC-TV</div><div class="m" style="left:406.84px;top:312.64px;color:#0f5fd8">7</div><div class="m" style="left:427.07px;top:312.64px;color:#0f5fd8">(7.1)</div><div class="m" style="left:474.29px;top:312.64px;color:#0f5fd8">ABC</div><div class="m" style="left:514.76px;top:312.64px;color:#0f5fd8">-10.4</div><div class="m" style="left:568.72px;top:312.64px;color:#0f5fd8">-101.3</div><div class="m" style="left:622.68px;top:312.64px;color:#0f5fd8">2Edge</div><div class="m" style="left:676.64px;top:312.64px;color:#0f5fd8">79.7</div><div class="m" style="left:717.11px;top:312.64px;color:#40a010">101°</div><div class="m" style="left:750.84px;top:312.64px;color:#40a010">(113°)</div><div class="row" style="top:322.438px;background:#e6e6e6"></div><div class="nmc" style="top:322.438px"></div><div class="bc" style="top:322.438px">C</div><div class="ba" style="top:322.438px">a</div><div class="m" style="left:325.90px;top:323.80px;color:#0f5fd8">WOLF-DT</div><div class="m" style="left:400.09px;top:323.80px;color:#0f5fd8">45</div><div class="m" style="left:420.33px;top:323.80px;color:#0f5fd8">(56.1)</div><div class="m" style="left:474.29px;top:323.80px;color:#0f5fd8">Fox</div><div class="m" style="left:514.76px;top:323.80px;color:#0f5fd8">-14.1</div><div class="m" style="left:568.72px;top:323.80px;color:#0f5fd8">-104.9</div><div class="m" style="left:622.68px;top:323.80px;color:#0f5fd8">2Edge</div><div class="m" style="left:676.64px;top:323.80px;color:#0f5fd8">25.0</div><div class="m" style="left:717.11px;top:323.80px;color:#d020b8">305°</div><div class="m" style="left:750.84px;top:323.80px;color:#d020b8">(317°)</div><div class="row" style="top:333.601px;background:#e6e6e6"></div><div class="nmc" style="top:333.601px"></div><div class="bc" style="top:333.601px">C</div><div class="m" style="left:325.90px;top:334.97px;color:#0f5fd8">WGTW-DT</div><div class="m" style="left:400.09px;top:334.97px;color:#0f5fd8">27</div><div class="m" style="left:420.33px;top:334.97px;color:#0f5fd8">(48.1)</div><div class="m" style="left:474.29px;top:334.97px;color:#0f5fd8">Ind</div><div class="m" style="left:514.76px;top:334.97px;color:#0f5fd8">-14.2</div><div class="m" style="left:568.72px;top:334.97px;color:#0f5fd8">-105.0</div><div class="m" style="left:622.68px;top:334.97px;color:#0f5fd8">2Edge</div><div class="m" style="left:676.64px;top:334.97px;color:#0f5fd8">65.7</div><div class="m" style="left:717.11px;top:334.97px;color:#10808c">169°</div><div class="m" style="left:750.84px;top:334.97px;color:#10808c">(181°)</div><div class="row" style="top:344.764px;background:#e6e6e6"></div><div class="nmc" style="top:344.764px"></div><div class="bc" style="top:344.764px">C</div><div class="m" style="left:325.90px;top:346.13px;color:#0f5fd8">WNEP-TV</div><div class="m" style="left:400.09px;top:346.13px;color:#0f5fd8">50</div><div class="m" style="left:420.33px;top:346.13px;color:#0f5fd8">(16.1)</div><div class="m" style="left:474.29px;top:346.13px;color:#0f5fd8">ABC</div><div class="m" style="left:514.76px;top:346.13px;color:#0f5fd8">-14.2</div><div class="m" style="left:568.72px;top:346.13px;color:#0f5fd8">-105.1</div><div class="m" style="left:622.68px;top:346.13px;color:#0f5fd8">2Edge</div><div class="m" style="left:676.64px;top:346.13px;color:#0f5fd8">25.0</div><div class="m" style="left:717.11px;top:346.13px;color:#d020b8">305°</div><div class="m" style="left:750.84px;top:346.13px;color:#d020b8">(317°)</div><div class="row" style="top:355.927px;background:#e6e6e6"></div><div class="nmc" style="top:355.927px"></div><div class="bc" style="top:355.927px">C</div><div class="m" style="left:325.90px;top:357.29px;color:#0f5fd8">WNJN</div><div class="m" style="left:400.09px;top:357.29px;color:#0f5fd8">51</div><div class="m" style="left:420.33px;top:357.29px;color:#0f5fd8">(50.1)</div><div class="m" style="left:474.29px;top:357.29px;color:#0f5fd8">PBS</div><div class="m" style="left:514.76px;top:357.29px;color:#0f5fd8">-14.2</div><div class="m" style="left:568.72px;top:357.29px;color:#0f5fd8">-105.1</div><div class="m" style="left:622.68px;top:357.29px;color:#0f5fd8">2Edge</div><div class="m" style="left:676.64px;top:357.29px;color:#0f5fd8">67.2</div><div class="m" style="left:723.86px;top:357.29px;color:#50a010">96°</div><div class="m" style="left:750.84px;top:357.29px;color:#50a010">(108°)</div><div class="row" style="top:367.090px;background:#e6e6e6"></div><div class="nmc" style="top:367.090px"></div><div class="bc" style="top:367.090px">C</div><div class="m" style="left:325.90px;top:368.46px;color:#9a2ad0">W36AZ</div><div class="m" style="left:400.09px;top:368.46px;color:#9a2ad0">36</div><div class="m" style="left:514.76px;top:368.46px;color:#9a2ad0">-15.3</div><div class="m" style="left:575.46px;top:368.46px;color:#9a2ad0">-94.1</div><div class="m" style="left:622.68px;top:368.46px;color:#9a2ad0">1Edge</div><div class="m" style="left:676.64px;top:368.46px;color:#9a2ad0">50.4</div><div class="m" style="left:723.86px;top:368.46px;color:#a89028">76°</div><div class="m" style="left:757.58px;top:368.46px;color:#a89028">(89°)</div><div class="row" style="top:378.253px;background:#e6e6e6"></div><div class="nmc" style="top:378.253px"></div><div class="bc" style="top:378.253px">C</div><div class="m" style="left:325.90px;top:379.62px;color:#0f5fd8">WBQM-LP</div><div class="m" style="left:406.84px;top:379.62px;color:#0f5fd8">3</div><div class="m" style="left:427.07px;top:379.62px;color:#0f5fd8">(3.1)</div><div class="m" style="left:514.76px;top:379.62px;color:#0f5fd8">-16.1</div><div class="m" style="left:568.72px;top:379.62px;color:#0f5fd8">-106.9</div><div class="m" style="left:622.68px;top:379.62px;color:#0f5fd8">2Edge</div><div class="m" style="left:676.64px;top:379.62px;color:#0f5fd8">80.6</div><div class="m" style="left:717.11px;top:379.62px;color:#40a010">101°</div><div class="m" style="left:750.84px;top:379.62px;color:#40a010">(113°)</div><div class="row" style="top:389.416px;background:#e6e6e6"></div><div class="nmc" style="top:389.416px"></div><div class="bc" style="top:389.416px">C</div><div class="ba" style="top:389.416px">a</div><div class="m" style="left:325.90px;top:390.78px;color:#0f5fd8">WWOR-TV</div><div class="m" style="left:400.09px;top:390.78px;color:#0f5fd8">38</div><div class="m" style="left:427.07px;top:390.78px;color:#0f5fd8">(9.1)</div><div class="m" style="left:474.29px;top:390.78px;color:#0f5fd8">MyN</div><div class="m" style="left:514.76px;top:390.78px;color:#0f5fd8">-16.4</div><div class="m" style="left:568.72px;top:390.78px;color:#0f5fd8">-107.2</div><div class="m" style="left:622.68px;top:390.78px;color:#0f5fd8">Tropo</div><div class="m" style="left:676.64px;top:390.78px;color:#0f5fd8">79.7</div><div class="m" style="left:717.11px;top:390.78px;color:#40a010">101°</div><div class="m" style="left:750.84px;top:390.78px;color:#40a010">(113°)</div><div class="row" style="top:400.579px;background:#e6e6e6"></div><div class="nmc" style="top:400.579px"></div><div class="bc" style="top:400.579px">C</div><div class="m" style="left:325.90px;top:401.95px;color:#0f5fd8">WVIA-TV</div><div class="m" style="left:400.09px;top:401.95px;color:#0f5fd8">41</div><div class="m" style="left:420.33px;top:401.95px;color:#0f5fd8">(44.1)</div><div class="m" style="left:474.29px;top:401.95px;color:#0f5fd8">PBS</div><div class="m" style="left:514.76px;top:401.95px;color:#0f5fd8">-16.6</div><div class="m" style="left:568.72px;top:401.95px;color:#0f5fd8">-107.5</div><div class="m" style="left:622.68px;top:401.95px;color:#0f5fd8">2Edge</div><div class="m" style="left:676.64px;top:401.95px;color:#0f5fd8">25.0</div><div class="m" style="left:717.11px;top:401.95px;color:#d020b8">305°</div><div class="m" style="left:750.84px;top:401.95px;color:#d020b8">(317°)</div><div class="row" style="top:411.742px;background:#e6e6e6"></div><div class="nmc" style="top:411.742px"></div><div class="bc" style="top:411.742px">C</div><div class="ba" style="top:411.742px">a</div><div class="m" style="left:325.90px;top:413.11px;color:#0f5fd8">WXTV-DT</div><div class="m" style="left:400.09px;top:413.11px;color:#0f5fd8">40</div><div class="m" style="left:420.33px;top:413.11px;color:#0f5fd8">(41.1)</div><div class="m" style="left:474.29px;top:413.11px;color:#0f5fd8">Uni</div><div class="m" style="left:514.76px;top:413.11px;color:#0f5fd8">-16.7</div><div class="m" style="left:568.72px;top:413.11px;color:#0f5fd8">-107.5</div><div class="m" style="left:622.68px;top:413.11px;color:#0f5fd8">Tropo</div><div class="m" style="left:676.64px;top:413.11px;color:#0f5fd8">79.7</div><div class="m" style="left:717.11px;top:413.11px;color:#40a010">101°</div><div class="m" style="left:750.84px;top:413.11px;color:#40a010">(113°)</div><div class="row" style="top:422.905px;background:#e6e6e6"></div><div class="nmc" style="top:422.905px"></div><div class="bc" style="top:422.905px">C</div><div class="m" style="left:325.90px;top:424.27px;color:#0f5fd8">WTBY-TV</div><div class="m" style="left:400.09px;top:424.27px;color:#0f5fd8">27</div><div class="m" style="left:420.33px;top:424.27px;color:#0f5fd8">(54.1)</div><div class="m" style="left:474.29px;top:424.27px;color:#0f5fd8">Ind</div><div class="m" style="left:514.76px;top:424.27px;color:#0f5fd8">-16.7</div><div class="m" style="left:568.72px;top:424.27px;color:#0f5fd8">-107.6</div><div class="m" style="left:622.68px;top:424.27px;color:#0f5fd8">Tropo</div><div class="m" style="left:676.64px;top:424.27px;color:#0f5fd8">87.1</div><div class="m" style="left:723.86px;top:424.27px;color:#b08a18">66°</div><div class="m" style="left:757.58px;top:424.27px;color:#b08a18">(78°)</div><div class="row" style="top:434.068px;background:#e6e6e6"></div><div class="nmc" style="top:434.068px"></div><div class="bc" style="top:434.068px">C</div><div class="m" style="left:325.90px;top:435.43px;color:#0f5fd8">WHP-TV</div><div class="m" style="left:400.09px;top:435.43px;color:#0f5fd8">21</div><div class="m" style="left:420.33px;top:435.43px;color:#0f5fd8">(21.1)</div><div class="m" style="left:474.29px;top:435.43px;color:#0f5fd8">CBS</div><div class="m" style="left:514.76px;top:435.43px;color:#0f5fd8">-16.8</div><div class="m" style="left:568.72px;top:435.43px;color:#0f5fd8">-107.7</div><div class="m" style="left:622.68px;top:435.43px;color:#0f5fd8">Tropo</div><div class="m" style="left:676.64px;top:435.43px;color:#0f5fd8">85.2</div><div class="m" style="left:717.11px;top:435.43px;color:#1818b8">240°</div><div class="m" style="left:750.84px;top:435.43px;color:#1818b8">(252°)</div><div class="row" style="top:445.231px;background:#e6e6e6"></div><div class="nmc" style="top:445.231px"></div><div class="bc" style="top:445.231px">C</div><div class="m" style="left:325.90px;top:446.60px;color:#0f5fd8">WGAL</div><div class="m" style="left:400.09px;top:446.60px;color:#0f5fd8">49</div><div class="m" style="left:474.29px;top:446.60px;color:#0f5fd8">NBC</div><div class="m" style="left:514.76px;top:446.60px;color:#0f5fd8">-16.8</div><div class="m" style="left:568.72px;top:446.60px;color:#0f5fd8">-107.7</div><div class="m" style="left:622.68px;top:446.60px;color:#0f5fd8">1Edge</div><div class="m" style="left:676.64px;top:446.60px;color:#0f5fd8">65.9</div><div class="m" style="left:717.11px;top:446.60px;color:#2050b0">213°</div><div class="m" style="left:750.84px;top:446.60px;color:#2050b0">(225°)</div><div class="row" style="top:456.394px;background:#e6e6e6"></div><div class="nmc" style="top:456.394px"></div><div class="bc" style="top:456.394px">C</div><div class="m" style="left:325.90px;top:457.76px;color:#0f5fd8">WCBS-DT</div><div class="m" style="left:400.09px;top:457.76px;color:#0f5fd8">33</div><div class="m" style="left:427.07px;top:457.76px;color:#0f5fd8">(2.1)</div><div class="m" style="left:474.29px;top:457.76px;color:#0f5fd8">CBS</div><div class="m" style="left:514.76px;top:457.76px;color:#0f5fd8">-17.4</div><div class="m" style="left:568.72px;top:457.76px;color:#0f5fd8">-108.2</div><div class="m" style="left:622.68px;top:457.76px;color:#0f5fd8">Tropo</div><div class="m" style="left:676.64px;top:457.76px;color:#0f5fd8">79.7</div><div class="m" style="left:717.11px;top:457.76px;color:#40a010">101°</div><div class="m" style="left:750.84px;top:457.76px;color:#40a010">(113°)</div><div class="row" style="top:467.557px;background:#e6e6e6"></div><div class="nmc" style="top:467.557px"></div><div class="bc" style="top:467.557px">C</div><div class="m" style="left:325.90px;top:468.92px;color:#0f5fd8">WRNN-DT</div><div class="m" style="left:400.09px;top:468.92px;color:#0f5fd8">48</div><div class="m" style="left:420.33px;top:468.92px;color:#0f5fd8">(48.1)</div><div class="m" style="left:474.29px;top:468.92px;color:#0f5fd8">Ind</div><div class="m" style="left:514.76px;top:468.92px;color:#0f5fd8">-17.6</div><div class="m" style="left:568.72px;top:468.92px;color:#0f5fd8">-108.5</div><div class="m" style="left:622.68px;top:468.92px;color:#0f5fd8">Tropo</div><div class="m" style="left:676.64px;top:468.92px;color:#0f5fd8">87.1</div><div class="m" style="left:723.86px;top:468.92px;color:#b08a18">66°</div><div class="m" style="left:757.58px;top:468.92px;color:#b08a18">(78°)</div><div class="row" style="top:478.720px;background:#e6e6e6"></div><div class="nmc" style="top:478.720px"></div><div class="bc" style="top:478.720px">C</div><div class="m" style="left:325.90px;top:480.09px;color:#0f5fd8">WNET-DT</div><div class="m" style="left:400.09px;top:480.09px;color:#0f5fd8">13</div><div class="m" style="left:420.33px;top:480.09px;color:#0f5fd8">(13.1)</div><div class="m" style="left:474.29px;top:480.09px;color:#0f5fd8">PBS</div><div class="m" style="left:514.76px;top:480.09px;color:#0f5fd8">-17.7</div><div class="m" style="left:568.72px;top:480.09px;color:#0f5fd8">-108.6</div><div class="m" style="left:622.68px;top:480.09px;color:#0f5fd8">2Edge</div><div class="m" style="left:676.64px;top:480.09px;color:#0f5fd8">79.7</div><div class="m" style="left:717.11px;top:480.09px;color:#40a010">101°</div><div class="m" style="left:750.84px;top:480.09px;color:#40a010">(113°)</div><div class="row" style="top:489.883px;background:#e6e6e6"></div><div class="nmc" style="top:489.883px"></div><div class="bc" style="top:489.883px">C</div><div class="m" style="left:325.90px;top:491.25px;color:#0f5fd8">WNJS</div><div class="m" style="left:400.09px;top:491.25px;color:#0f5fd8">22</div><div class="m" style="left:420.33px;top:491.25px;color:#0f5fd8">(23.1)</div><div class="m" style="left:474.29px;top:491.25px;color:#0f5fd8">PBS</div><div class="m" style="left:514.76px;top:491.25px;color:#0f5fd8">-17.7</div><div class="m" style="left:568.72px;top:491.25px;color:#0f5fd8">-108.6</div><div class="m" style="left:622.68px;top:491.25px;color:#0f5fd8">Tropo</div><div class="m" style="left:676.64px;top:491.25px;color:#0f5fd8">92.4</div><div class="m" style="left:717.11px;top:491.25px;color:#10907a">159°</div><div class="m" style="left:750.84px;top:491.25px;color:#10907a">(171°)</div><div class="row" style="top:501.046px;background:#e6e6e6"></div><div class="nmc" style="top:501.046px"></div><div class="bc" style="top:501.046px">C</div><div class="ba" style="top:501.046px">a</div><div class="m" style="left:325.90px;top:502.41px;color:#0f5fd8">WPIX</div><div class="m" style="left:400.09px;top:502.41px;color:#0f5fd8">11</div><div class="m" style="left:420.33px;top:502.41px;color:#0f5fd8">(11.1)</div><div class="m" style="left:481.03px;top:502.41px;color:#0f5fd8">CW</div><div class="m" style="left:514.76px;top:502.41px;color:#0f5fd8">-17.8</div><div class="m" style="left:568.72px;top:502.41px;color:#0f5fd8">-108.6</div><div class="m" style="left:622.68px;top:502.41px;color:#0f5fd8">2Edge</div><div class="m" style="left:676.64px;top:502.41px;color:#0f5fd8">79.7</div><div class="m" style="left:717.11px;top:502.41px;color:#40a010">101°</div><div class="m" style="left:750.84px;top:502.41px;color:#40a010">(113°)</div><div class="row" style="top:512.209px;background:#e6e6e6"></div><div class="nmc" style="top:512.209px"></div><div class="bc" style="top:512.209px">C</div><div class="m" style="left:325.90px;top:513.58px;color:#0f5fd8">WGCB-DT</div><div class="m" style="left:400.09px;top:513.58px;color:#0f5fd8">30</div><div class="m" style="left:420.33px;top:513.58px;color:#0f5fd8">(49.1)</div><div class="m" style="left:474.29px;top:513.58px;color:#0f5fd8">Ind</div><div class="m" style="left:514.76px;top:513.58px;color:#0f5fd8">-18.2</div><div class="m" style="left:568.72px;top:513.58px;color:#0f5fd8">-109.0</div><div class="m" style="left:622.68px;top:513.58px;color:#0f5fd8">Tropo</div><div class="m" style="left:676.64px;top:513.58px;color:#0f5fd8">94.2</div><div class="m" style="left:717.11px;top:513.58px;color:#2040b0">219°</div><div class="m" style="left:750.84px;top:513.58px;color:#2040b0">(231°)</div><div class="row" style="top:523.372px;background:#e6e6e6"></div><div class="nmc" style="top:523.372px"></div><div class="bc" style="top:523.372px">C</div><div class="m" style="left:325.90px;top:524.74px;color:#9a2ad0">W49BE</div><div class="m" style="left:400.09px;top:524.74px;color:#9a2ad0">49</div><div class="m" style="left:514.76px;top:524.74px;color:#9a2ad0">-18.3</div><div class="m" style="left:575.46px;top:524.74px;color:#9a2ad0">-97.2</div><div class="m" style="left:622.68px;top:524.74px;color:#9a2ad0">1Edge</div><div class="m" style="left:676.64px;top:524.74px;color:#9a2ad0">32.6</div><div class="m" style="left:717.11px;top:524.74px;color:#40a010">105°</div><div class="m" style="left:750.84px;top:524.74px;color:#40a010">(117°)</div><div class="row" style="top:534.535px;background:#e6e6e6"></div><div class="nmc" style="top:534.535px"></div><div class="bc" style="top:534.535px">C</div><div class="m" style="left:325.90px;top:535.90px;color:#0f5fd8">WNYW</div><div class="m" style="left:400.09px;top:535.90px;color:#0f5fd8">44</div><div class="m" style="left:427.07px;top:535.90px;color:#0f5fd8">(5.1)</div><div class="m" style="left:474.29px;top:535.90px;color:#0f5fd8">Fox</div><div class="m" style="left:514.76px;top:535.90px;color:#0f5fd8">-18.5</div><div class="m" style="left:568.72px;top:535.90px;color:#0f5fd8">-109.4</div><div class="m" style="left:622.68px;top:535.90px;color:#0f5fd8">Tropo</div><div class="m" style="left:676.64px;top:535.90px;color:#0f5fd8">79.7</div><div class="m" style="left:717.11px;top:535.90px;color:#40a010">101°</div><div class="m" style="left:750.84px;top:535.90px;color:#40a010">(113°)</div><div class="row" style="top:545.698px;background:#e6e6e6"></div><div class="nmc" style="top:545.698px"></div><div class="bc" style="top:545.698px">C</div><div class="m" style="left:325.90px;top:547.06px;color:#0f5fd8">WFUT-DT</div><div class="m" style="left:400.09px;top:547.06px;color:#0f5fd8">30</div><div class="m" style="left:420.33px;top:547.06px;color:#0f5fd8">(68.1)</div><div class="m" style="left:474.29px;top:547.06px;color:#0f5fd8">Tel</div><div class="m" style="left:514.76px;top:547.06px;color:#0f5fd8">-18.9</div><div class="m" style="left:568.72px;top:547.06px;color:#0f5fd8">-109.7</div><div class="m" style="left:622.68px;top:547.06px;color:#0f5fd8">Tropo</div><div class="m" style="left:676.64px;top:547.06px;color:#0f5fd8">79.7</div><div class="m" style="left:717.11px;top:547.06px;color:#40a010">101°</div><div class="m" style="left:750.84px;top:547.06px;color:#40a010">(113°)</div><div class="row" style="top:556.861px;background:#e6e6e6"></div><div class="nmc" style="top:556.861px"></div><div class="bc" style="top:556.861px">C</div><div class="m" style="left:325.90px;top:558.23px;color:#0f5fd8">W42CX</div><div class="m" style="left:400.09px;top:558.23px;color:#0f5fd8">42</div><div class="m" style="left:420.33px;top:558.23px;color:#0f5fd8">(42.1)</div><div class="m" style="left:514.76px;top:558.23px;color:#0f5fd8">-19.1</div><div class="m" style="left:568.72px;top:558.23px;color:#0f5fd8">-110.0</div><div class="m" style="left:622.68px;top:558.23px;color:#0f5fd8">2Edge</div><div class="m" style="left:676.64px;top:558.23px;color:#0f5fd8">46.2</div><div class="m" style="left:723.86px;top:558.23px;color:#80a010">87°</div><div class="m" style="left:757.58px;top:558.23px;color:#80a010">(99°)</div><div class="row" style="top:568.024px;background:#e6e6e6"></div><div class="nmc" style="top:568.024px"></div><div class="bc" style="top:568.024px">C</div><div class="ba" style="top:568.024px">a</div><div class="m" style="left:325.90px;top:569.39px;color:#0f5fd8">WHTM-DT</div><div class="m" style="left:400.09px;top:569.39px;color:#0f5fd8">10</div><div class="m" style="left:420.33px;top:569.39px;color:#0f5fd8">(27.1)</div><div class="m" style="left:474.29px;top:569.39px;color:#0f5fd8">ABC</div><div class="m" style="left:514.76px;top:569.39px;color:#0f5fd8">-19.2</div><div class="m" style="left:568.72px;top:569.39px;color:#0f5fd8">-110.0</div><div class="m" style="left:622.68px;top:569.39px;color:#0f5fd8">Tropo</div><div class="m" style="left:676.64px;top:569.39px;color:#0f5fd8">89.9</div><div class="m" style="left:717.11px;top:569.39px;color:#1818b8">240°</div><div class="m" style="left:750.84px;top:569.39px;color:#1818b8">(252°)</div><div class="row" style="top:579.187px;background:#e6e6e6"></div><div class="nmc" style="top:579.187px"></div><div class="bc" style="top:579.187px">C</div><div class="m" style="left:325.90px;top:580.55px;color:#0f5fd8">WTVE</div><div class="m" style="left:400.09px;top:580.55px;color:#0f5fd8">25</div><div class="m" style="left:420.33px;top:580.55px;color:#0f5fd8">(51.1)</div><div class="m" style="left:474.29px;top:580.55px;color:#0f5fd8">Ind</div><div class="m" style="left:514.76px;top:580.55px;color:#0f5fd8">-19.2</div><div class="m" style="left:568.72px;top:580.55px;color:#0f5fd8">-110.0</div><div class="m" style="left:622.68px;top:580.55px;color:#0f5fd8">1Edge</div><div class="m" style="left:676.64px;top:580.55px;color:#0f5fd8">48.3</div><div class="m" style="left:717.11px;top:580.55px;color:#2058a8">207°</div><div class="m" style="left:750.84px;top:580.55px;color:#2058a8">(220°)</div><div class="row" style="top:590.350px;background:#e6e6e6"></div><div class="nmc" style="top:590.350px"></div><div class="m" style="left:325.90px;top:591.72px;color:#0f5fd8">WPXO-LD</div><div class="m" style="left:406.84px;top:591.72px;color:#0f5fd8">4</div><div class="m" style="left:420.33px;top:591.72px;color:#0f5fd8">(34.1)</div><div class="m" style="left:514.76px;top:591.72px;color:#0f5fd8">-19.2</div><div class="m" style="left:568.72px;top:591.72px;color:#0f5fd8">-110.0</div><div class="m" style="left:622.68px;top:591.72px;color:#0f5fd8">2Edge</div><div class="m" style="left:676.64px;top:591.72px;color:#0f5fd8">79.7</div><div class="m" style="left:717.11px;top:591.72px;color:#40a010">101°</div><div class="m" style="left:750.84px;top:591.72px;color:#40a010">(113°)</div>

<div class="abs" style="left:346.6px;top:617px;width:7px;height:11.6px;background:#c80000;color:#fff;font-family:'Liberation Mono',monospace;font-size:11px;line-height:13px;text-align:center">C</div>
<div class="abs" style="left:361px;top:617.8px;font-family:'Liberation Sans',sans-serif;font-size:11.6px;line-height:11.6px;color:#111;white-space:pre;transform:scaleX(1.09);transform-origin:0 0">= Co-channel warning</div>
<div class="abs" style="left:557.9px;top:617.4px;width:6.2px;height:11.2px;background:#ff8080;color:#fff;font-family:'Liberation Mono',monospace;font-size:11px;line-height:14px;text-align:center">a</div>
<div class="abs" style="left:572px;top:617.8px;font-family:'Liberation Sans',sans-serif;font-size:11.6px;line-height:11.6px;color:#111;white-space:pre;transform:scaleX(1.09);transform-origin:0 0">= Adjacent channel warning</div>

<svg class="abs" style="left:0;top:600px" width="800" height="168" viewBox="0 600 800 168"><line x1="9" y1="645.50" x2="172.3" y2="645.50" class="gd"/><line x1="216" y1="645.50" x2="791.5" y2="645.50" class="gd"/><line x1="9" y1="657.50" x2="172.3" y2="657.50" class="gd"/><line x1="216" y1="657.50" x2="791.5" y2="657.50" class="gd"/><line x1="9" y1="670.50" x2="172.3" y2="670.50" class="gd"/><line x1="216" y1="670.50" x2="791.5" y2="670.50" class="gd"/><line x1="9" y1="683.50" x2="172.3" y2="683.50" class="gd"/><line x1="216" y1="683.50" x2="791.5" y2="683.50" class="gd"/><line x1="9" y1="696.50" x2="172.3" y2="696.50" class="gd"/><line x1="216" y1="696.50" x2="791.5" y2="696.50" class="gd"/><line x1="9" y1="709.50" x2="172.3" y2="709.50" class="gd"/><line x1="216" y1="709.50" x2="791.5" y2="709.50" class="gd"/><line x1="9" y1="721.50" x2="172.3" y2="721.50" class="gd"/><line x1="216" y1="721.50" x2="791.5" y2="721.50" class="gd"/><line x1="9" y1="734.50" x2="172.3" y2="734.50" class="gd"/><line x1="216" y1="734.50" x2="791.5" y2="734.50" class="gd"/><line x1="9" y1="747.50" x2="172.3" y2="747.50" class="gd"/><line x1="216" y1="747.50" x2="791.5" y2="747.50" class="gd"/><rect x="39.1" y="637" width="9.8" height="123" fill="#e6e6e6" fill-opacity="0.8"/><rect x="70.3" y="637" width="30.3" height="123" fill="#e6e6e6" fill-opacity="0.8"/><path d="M12.5 632.6 H7.8 V760.6" class="fr"/><path d="M65 632.6 H110.6" class="fr"/><path d="M162.5 632.6 H173.3 V760.6" class="fr"/><path d="M482.5 632.6 H214.6 V760.6" class="fr"/><path d="M524 632.6 H792.4 V760.6" class="fr"/><line x1="7" y1="760.3" x2="174.3" y2="760.3" stroke="#111" stroke-width="2"/><line x1="213.6" y1="760.3" x2="793.4" y2="760.3" stroke="#111" stroke-width="2"/><text x="39.25" y="635.6" class="tl" text-anchor="middle">VHF Lo</text><text x="137.2" y="635.6" class="tl" text-anchor="middle">VHF Hi</text><text x="503.5" y="635.6" class="tl" text-anchor="middle">UHF</text><text x="194" y="635.6" class="ax" text-anchor="middle">dBm</text><text x="201.8" y="648.10" class="ax" text-anchor="end">-10</text><text x="201.8" y="660.90" class="ax" text-anchor="end">-20</text><text x="201.8" y="673.70" class="ax" text-anchor="end">-30</text><text x="201.8" y="686.50" class="ax" text-anchor="end">-40</text><text x="201.8" y="699.30" class="ax" text-anchor="end">-50</text><text x="201.8" y="712.10" class="ax" text-anchor="end">-60</text><text x="201.8" y="724.90" class="ax" text-anchor="end">-70</text><text x="201.8" y="737.70" class="ax" text-anchor="end">-80</text><text x="201.8" y="750.50" class="ax" text-anchor="end">-90</text><text x="193.7" y="761.6" class="ch" text-anchor="middle">Channel</text><rect x="10.20" y="756" width="6.00" height="7" fill="#fff"/><text x="13.20" y="762.2" class="cl" text-anchor="middle">2</text><rect x="31.00" y="756" width="6.00" height="7" fill="#fff"/><text x="34.00" y="762.2" class="cl" text-anchor="middle">4</text><rect x="51.80" y="756" width="6.00" height="7" fill="#fff"/><text x="54.80" y="762.2" class="cl" text-anchor="middle">5</text><rect x="62.20" y="756" width="6.00" height="7" fill="#fff"/><text x="65.20" y="762.2" class="cl" text-anchor="middle">6</text><rect x="102.76" y="756" width="6.00" height="7" fill="#fff"/><text x="105.76" y="762.2" class="cl" text-anchor="middle">7</text><rect x="123.56" y="756" width="6.00" height="7" fill="#fff"/><text x="126.56" y="762.2" class="cl" text-anchor="middle">9</text><rect x="142.11" y="756" width="10.50" height="7" fill="#fff"/><text x="147.36" y="762.2" class="cl" text-anchor="middle">11</text><rect x="162.91" y="756" width="10.50" height="7" fill="#fff"/><text x="168.16" y="762.2" class="cl" text-anchor="middle">13</text><rect x="214.35" y="756" width="10.50" height="7" fill="#fff"/><text x="219.60" y="762.2" class="cl" text-anchor="middle">14</text><rect x="235.02" y="756" width="10.50" height="7" fill="#fff"/><text x="240.27" y="762.2" class="cl" text-anchor="middle">16</text><rect x="266.02" y="756" width="10.50" height="7" fill="#fff"/><text x="271.27" y="762.2" class="cl" text-anchor="middle">19</text><rect x="297.03" y="756" width="10.50" height="7" fill="#fff"/><text x="302.28" y="762.2" class="cl" text-anchor="middle">22</text><rect x="328.03" y="756" width="10.50" height="7" fill="#fff"/><text x="333.28" y="762.2" class="cl" text-anchor="middle">25</text><rect x="359.04" y="756" width="10.50" height="7" fill="#fff"/><text x="364.29" y="762.2" class="cl" text-anchor="middle">28</text><rect x="390.05" y="756" width="10.50" height="7" fill="#fff"/><text x="395.30" y="762.2" class="cl" text-anchor="middle">31</text><rect x="421.05" y="756" width="10.50" height="7" fill="#fff"/><text x="426.30" y="762.2" class="cl" text-anchor="middle">34</text><rect x="452.06" y="756" width="10.50" height="7" fill="#fff"/><text x="457.31" y="762.2" class="cl" text-anchor="middle">37</text><rect x="483.06" y="756" width="10.50" height="7" fill="#fff"/><text x="488.31" y="762.2" class="cl" text-anchor="middle">40</text><rect x="514.07" y="756" width="10.50" height="7" fill="#fff"/><text x="519.32" y="762.2" class="cl" text-anchor="middle">43</text><rect x="545.07" y="756" width="10.50" height="7" fill="#fff"/><text x="550.32" y="762.2" class="cl" text-anchor="middle">46</text><rect x="576.08" y="756" width="10.50" height="7" fill="#fff"/><text x="581.33" y="762.2" class="cl" text-anchor="middle">49</text><rect x="607.08" y="756" width="10.50" height="7" fill="#fff"/><text x="612.33" y="762.2" class="cl" text-anchor="middle">52</text><rect x="638.09" y="756" width="10.50" height="7" fill="#fff"/><text x="643.34" y="762.2" class="cl" text-anchor="middle">55</text><rect x="669.09" y="756" width="10.50" height="7" fill="#fff"/><text x="674.34" y="762.2" class="cl" text-anchor="middle">58</text><rect x="700.10" y="756" width="10.50" height="7" fill="#fff"/><text x="705.35" y="762.2" class="cl" text-anchor="middle">61</text><rect x="731.10" y="756" width="10.50" height="7" fill="#fff"/><text x="736.35" y="762.2" class="cl" text-anchor="middle">64</text><rect x="762.11" y="756" width="10.50" height="7" fill="#fff"/><text x="767.36" y="762.2" class="cl" text-anchor="middle">67</text><rect x="782.78" y="756" width="10.50" height="7" fill="#fff"/><text x="788.03" y="762.2" class="cl" text-anchor="middle">69</text><rect x="17.10" y="749.65" width="13" height="6.6" rx="3.3" fill="#ffffa0"/><rect x="19.10" y="751.25" width="9" height="3.4" rx="0.8" fill="#78a6e6"/><rect x="58.70" y="737.23" width="13" height="6.6" rx="3.3" fill="#ffff00"/><rect x="60.70" y="738.83" width="9" height="3.4" rx="0.8" fill="#0050d0"/><rect x="99.26" y="740.05" width="13" height="6.6" rx="3.3" fill="#ffffa0"/><rect x="101.26" y="741.65" width="9" height="3.4" rx="0.8" fill="#78a6e6"/><rect x="109.66" y="752.59" width="13" height="6.6" rx="3.3" fill="#ffff20"/><rect x="111.66" y="754.19" width="9" height="3.4" rx="0.8" fill="#3070d8"/><rect x="109.66" y="752.85" width="13" height="6.6" rx="3.3" fill="#ffff20"/><rect x="111.66" y="754.45" width="9" height="3.4" rx="0.8" fill="#3070d8"/><rect x="120.06" y="692.05" width="13" height="6.6" rx="3.3" fill="#ffff00"/><rect x="122.06" y="693.65" width="9" height="3.4" rx="0.8" fill="#0050d0"/><rect x="140.86" y="736.59" width="13" height="6.6" rx="3.3" fill="#ffffa0"/><rect x="142.86" y="738.19" width="9" height="3.4" rx="0.8" fill="#78a6e6"/><rect x="151.26" y="749.65" width="13" height="6.6" rx="3.3" fill="#ffff00"/><rect x="153.26" y="751.25" width="9" height="3.4" rx="0.8" fill="#0050d0"/><rect x="161.66" y="738.51" width="13" height="6.6" rx="3.3" fill="#ffffa0"/><rect x="163.66" y="740.11" width="9" height="3.4" rx="0.8" fill="#78a6e6"/><text transform="translate(27.60 748.50) rotate(-90)" x="0" y="0" class="vl" fill="#86aee8" textLength="41.6" lengthAdjust="spacingAndGlyphs">WFPA-CA</text><text transform="translate(69.20 733.90) rotate(-90)" x="0" y="0" class="vl" fill="#0a5ad8" textLength="38.9" lengthAdjust="spacingAndGlyphs">WPVI-DT</text><text transform="translate(109.76 736.70) rotate(-90)" x="0" y="0" class="vl" fill="#86aee8" textLength="44.0" lengthAdjust="spacingAndGlyphs">W07DC-D</text><text transform="translate(120.16 748.90) rotate(-90)" x="0" y="0" class="vl" fill="#4a82dc" textLength="24.5" lengthAdjust="spacingAndGlyphs">WGAL</text><text transform="translate(120.16 748.90) rotate(-90)" x="0" y="0" class="vl" fill="#4a82dc" textLength="24.9" lengthAdjust="spacingAndGlyphs">WNJB</text><text transform="translate(130.56 689.50) rotate(-90)" x="0" y="0" class="vl" fill="#0a5ad8" textLength="42.0" lengthAdjust="spacingAndGlyphs">WBPH-TV</text><text transform="translate(151.36 734.70) rotate(-90)" x="0" y="0" class="vl" fill="#86aee8" textLength="42.7" lengthAdjust="spacingAndGlyphs">WBRE-DT</text><text transform="translate(161.76 746.90) rotate(-90)" x="0" y="0" class="vl" fill="#0a5ad8" textLength="42.2" lengthAdjust="spacingAndGlyphs">WHYY-TV</text><text transform="translate(172.16 735.70) rotate(-90)" x="0" y="0" class="vl" fill="#86aee8" textLength="44.7" lengthAdjust="spacingAndGlyphs">WYOU-DT</text><rect x="245.60" y="746.74" width="10" height="5" rx="1.5" fill="#fff4e8"/><rect x="246.10" y="747.44" width="9" height="3.6" rx="1.2" fill="#0a55d0" stroke="#002a80" stroke-width="0.8"/><rect x="255.94" y="752.75" width="10" height="5" rx="1.5" fill="#fff4e8"/><rect x="256.44" y="753.45" width="9" height="3.6" rx="1.2" fill="#0a55d0" stroke="#002a80" stroke-width="0.8"/><rect x="307.62" y="747.38" width="10" height="5" rx="1.5" fill="#fff4e8"/><rect x="308.12" y="748.08" width="9" height="3.6" rx="1.2" fill="#0a55d0" stroke="#002a80" stroke-width="0.8"/><rect x="328.28" y="756.59" width="10" height="5" rx="1.5" fill="#fff4e8"/><rect x="328.78" y="757.29" width="9" height="3.6" rx="1.2" fill="#80aae6" stroke="#6a94d0" stroke-width="0.8"/><rect x="338.62" y="746.61" width="10" height="5" rx="1.5" fill="#fff4e8"/><rect x="339.12" y="747.31" width="9" height="3.6" rx="1.2" fill="#80aae6" stroke="#6a94d0" stroke-width="0.8"/><rect x="338.62" y="749.30" width="10" height="5" rx="1.5" fill="#fff4e8"/><rect x="339.12" y="750.00" width="9" height="3.6" rx="1.2" fill="#80aae6" stroke="#6a94d0" stroke-width="0.8"/><rect x="369.62" y="752.62" width="10" height="5" rx="1.5" fill="#fff4e8"/><rect x="370.12" y="753.32" width="9" height="3.6" rx="1.2" fill="#80aae6" stroke="#6a94d0" stroke-width="0.8"/><rect x="390.30" y="746.86" width="10" height="5" rx="1.5" fill="#fff4e8"/><rect x="390.80" y="747.56" width="9" height="3.6" rx="1.2" fill="#80aae6" stroke="#6a94d0" stroke-width="0.8"/><rect x="421.30" y="748.40" width="10" height="5" rx="1.5" fill="#fff4e8"/><rect x="421.80" y="749.10" width="9" height="3.6" rx="1.2" fill="#0a55d0" stroke="#002a80" stroke-width="0.8"/><rect x="431.63" y="754.54" width="10" height="5" rx="1.5" fill="#fff4e8"/><rect x="432.13" y="755.24" width="9" height="3.6" rx="1.2" fill="#80aae6" stroke="#6a94d0" stroke-width="0.8"/><rect x="472.98" y="726.26" width="10" height="5" rx="1.5" fill="#fff4e8"/><rect x="473.48" y="726.96" width="9" height="3.6" rx="1.2" fill="#0a55d0" stroke="#002a80" stroke-width="0.8"/><rect x="503.98" y="756.46" width="10" height="5" rx="1.5" fill="#fff4e8"/><rect x="504.48" y="757.16" width="9" height="3.6" rx="1.2" fill="#80aae6" stroke="#6a94d0" stroke-width="0.8"/><rect x="545.32" y="727.28" width="10" height="5" rx="1.5" fill="#fff4e8"/><rect x="545.82" y="727.98" width="9" height="3.6" rx="1.2" fill="#0a55d0" stroke="#002a80" stroke-width="0.8"/><text transform="translate(254.60 743.00) rotate(-90)" x="0" y="0" class="vl" fill="#0a5ad8" textLength="42.0" lengthAdjust="spacingAndGlyphs">WPHL-DT</text><text transform="translate(264.94 749.00) rotate(-90)" x="0" y="0" class="vl" fill="#0a5ad8" textLength="44.5" lengthAdjust="spacingAndGlyphs">WMBC-TV</text><text transform="translate(316.62 743.90) rotate(-90)" x="0" y="0" class="vl" fill="#0a5ad8" textLength="42.9" lengthAdjust="spacingAndGlyphs">WLYH-DT</text><text transform="translate(337.28 751.75) rotate(-90)" x="0" y="0" class="vl" fill="#86aee8" textLength="24.5" lengthAdjust="spacingAndGlyphs">WTVE</text><text transform="translate(347.62 746.50) rotate(-90)" x="0" y="0" class="vl" fill="#86aee8" textLength="40.0" lengthAdjust="spacingAndGlyphs">KYW-TV</text><text transform="translate(347.62 746.50) rotate(-90)" x="0" y="0" class="vl" fill="#86aee8" textLength="43.8" lengthAdjust="spacingAndGlyphs">W26DE-D</text><text transform="translate(378.62 748.25) rotate(-90)" x="0" y="0" class="vl" fill="#86aee8" textLength="42.0" lengthAdjust="spacingAndGlyphs">WUVP-DT</text><text transform="translate(399.30 743.00) rotate(-90)" x="0" y="0" class="vl" fill="#86aee8" textLength="41.6" lengthAdjust="spacingAndGlyphs">WPPX-DT</text><text transform="translate(430.30 745.10) rotate(-90)" x="0" y="0" class="vl" fill="#0a5ad8" textLength="27.5" lengthAdjust="spacingAndGlyphs">WCAU</text><text transform="translate(440.63 750.00) rotate(-90)" x="0" y="0" class="vl" fill="#86aee8" textLength="23.6" lengthAdjust="spacingAndGlyphs">WYBE</text><text transform="translate(481.98 721.90) rotate(-90)" x="0" y="0" class="vl" fill="#0a5ad8" textLength="41.3" lengthAdjust="spacingAndGlyphs">WLVT-TV</text><text transform="translate(512.98 752.00) rotate(-90)" x="0" y="0" class="vl" fill="#86aee8" textLength="42.0" lengthAdjust="spacingAndGlyphs">WTXF-DT</text><text transform="translate(554.32 724.00) rotate(-90)" x="0" y="0" class="vl" fill="#0a5ad8" textLength="44.0" lengthAdjust="spacingAndGlyphs">WFMZ-TV</text></svg>
</div></body></html>
